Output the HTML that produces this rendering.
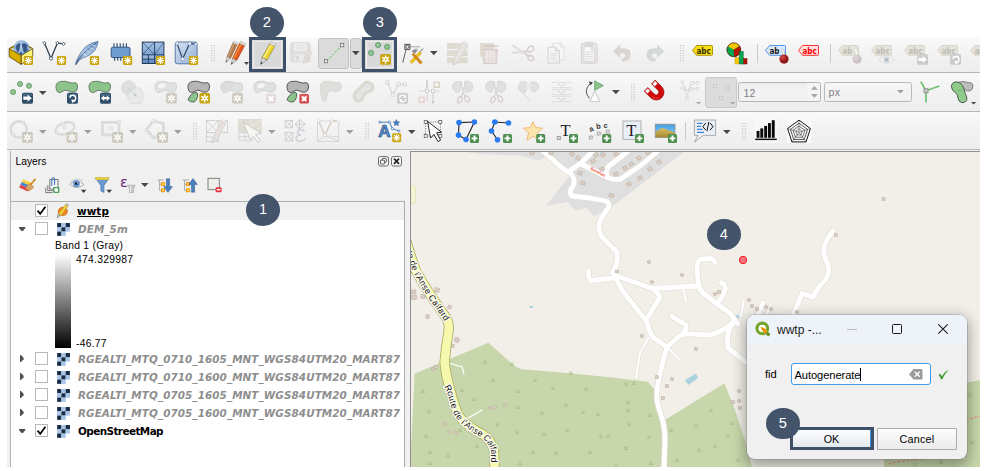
<!DOCTYPE html>
<html lang="en"><head><meta charset="utf-8"><title>QGIS - add point feature</title>
<style>
html,body{margin:0;padding:0;background:#fff;}
body{width:985px;height:471px;position:relative;overflow:hidden;font-family:"Liberation Sans",sans-serif;font-size:10.3px;color:#000;}
.abs{position:absolute;}
#app{position:absolute;left:7px;top:38px;width:973px;height:429px;background:#f0f0f0;overflow:hidden;}
.hl{position:absolute;left:7px;width:973px;height:1px;}
svg{position:absolute;overflow:visible;}
.lyr{font-family:"DejaVu Sans","Liberation Sans",sans-serif;font-weight:bold;font-style:italic;font-size:10.4px;line-height:16px;white-space:nowrap;letter-spacing:0.08px}
.lyr.g{color:#8e8e8e;}
.t{font-size:10.3px;line-height:14px;white-space:nowrap;letter-spacing:0.28px}
.badge{position:absolute;width:33.6px;height:31.6px;border-radius:50%;background:#44546a;color:#fff;font-size:14.6px;line-height:31.6px;text-align:center;font-family:"Liberation Sans",sans-serif;}
</style></head>
<body>
<div id="app"></div>
<div class="hl" style="top:38px;height:34px;background:linear-gradient(#f9f9f9,#f2f2f2 50%,#ededed)"></div>
<div class="hl" style="top:73px;height:38px;background:linear-gradient(#f9f9f9,#f2f2f2 50%,#ededed)"></div>
<div class="hl" style="top:112px;height:37px;background:linear-gradient(#f9f9f9,#f2f2f2 50%,#ededed)"></div>
<div class="hl" style="top:72px;background:#b6b6b6"></div>
<div class="hl" style="top:111px;background:#b6b6b6"></div>
<div class="hl" style="top:149px;background:#b6b6b6"></div>
<div class="hl" style="top:150px;background:#f3f3f3"></div>
<svg width="0" height="0" style="left:0;top:0"><defs>
<linearGradient id="gBlue" x1="0" y1="0" x2="0" y2="1"><stop offset="0" stop-color="#a9c4e6"/><stop offset="1" stop-color="#5e8cc4"/></linearGradient>
<linearGradient id="gBlueL" x1="0" y1="0" x2="1" y2="1"><stop offset="0" stop-color="#d5e1f1"/><stop offset="1" stop-color="#93b1d9"/></linearGradient>
<radialGradient id="gGlobe" cx="0.4" cy="0.35" r="0.7"><stop offset="0" stop-color="#c5daf2"/><stop offset="1" stop-color="#6b96cf"/></radialGradient>
<radialGradient id="gPin" cx="0.35" cy="0.3" r="0.75"><stop offset="0" stop-color="#d9514e"/><stop offset="0.5" stop-color="#a51d1d"/><stop offset="1" stop-color="#7c1010"/></radialGradient>
<radialGradient id="gPinD" cx="0.35" cy="0.3" r="0.75"><stop offset="0" stop-color="#dcd6d6"/><stop offset="1" stop-color="#c4bcbc"/></radialGradient>
<linearGradient id="gSand" x1="0" y1="0" x2="0" y2="1"><stop offset="0" stop-color="#d8bf6a"/><stop offset="1" stop-color="#a88a2c"/></linearGradient>
<linearGradient id="gSky" x1="0" y1="0" x2="0" y2="1"><stop offset="0" stop-color="#3f9fe6"/><stop offset="1" stop-color="#9ed2f4"/></linearGradient>
<linearGradient id="gFeather" x1="1" y1="0" x2="0" y2="1"><stop offset="0" stop-color="#7fa3cf"/><stop offset="0.6" stop-color="#a9c3e2"/><stop offset="1" stop-color="#5d7fa8"/></linearGradient>
</defs></svg>
<svg style="left:9px;top:41px" width="24" height="24" viewBox="0 0 24 24" ><path d="M0.2 7.5 L12.3 1 L23.75 7.5" fill="#b89200" stroke="#4a3a00" stroke-width="0.7" stroke-linejoin="round"/><circle cx="12.5" cy="7.2" r="7.7" fill="url(#gGlobe)" stroke="#7fa3d3" stroke-width="0.4"/><path d="M6.6 5.4 Q8 2.4 10.8 2 Q12.4 3.4 11 5.6 Q11.4 8.6 9.4 10.8 Q7.6 11.6 7.6 8.8 Q6.2 7.4 6.6 5.4Z M13.2 2.4 Q16.6 1.6 18.6 4.4 Q17 6.4 18.6 8.6 Q18.2 11.6 15.2 11.2 Q13.4 9.6 13.8 7.2 Q12.2 4.6 13.2 2.4Z M10.6 11.4 Q12.4 10.8 13.4 12.6 Q12.8 14.2 11.4 14Z" fill="#2b4e7e" opacity="0.92"/><path d="M0.2 7.5 L12.3 14.5 L12.3 23.4 L0.2 15.8Z" fill="#d9ac00" stroke="#4a3a00" stroke-width="0.75" stroke-linejoin="round"/><path d="M12.3 14.5 L23.75 7.5 L23.75 15.5 L12.3 23.4Z" fill="#fff47c" stroke="#4a3a00" stroke-width="0.75" stroke-linejoin="round"/><rect x="14.8" y="14.9" width="9.2" height="9.2" rx="1.47" fill="#c9a40e"/><path d="M15.81 19.50L22.99 19.50M16.86 16.96L21.94 22.04M19.40 15.91L19.40 23.09M21.94 16.96L16.86 22.04" stroke="#fff" stroke-width="1.15" stroke-linecap="butt" fill="none"/></svg>
<svg style="left:42px;top:41px" width="24" height="24" viewBox="0 0 24 24" ><path d="M2.4 2 L9 17.4 L15.4 2 L21.6 2.8" fill="none" stroke="#2c3e50" stroke-width="1.25" stroke-linejoin="round"/><g fill="#fff" stroke="#2c3e50" stroke-width="0.8"><path d="M2.4 0.3L4.1 2L2.4 3.7L0.7 2Z"/><path d="M15.4 0.3L17.1 2L15.4 3.7L13.7 2Z"/><path d="M21.6 1.1L23.3 2.8L21.6 4.5L19.9 2.8Z"/><circle cx="9" cy="17.4" r="1.6"/></g><rect x="14.9" y="14.9" width="9.2" height="9.2" rx="1.47" fill="#c9a40e"/><path d="M15.91 19.50L23.09 19.50M16.96 16.96L22.04 22.04M19.50 15.91L19.50 23.09M22.04 16.96L16.96 22.04" stroke="#fff" stroke-width="1.15" stroke-linecap="butt" fill="none"/></svg>
<svg style="left:75px;top:41px" width="24" height="24" viewBox="0 0 24 24" ><path d="M23.1 0.25 Q16 1.5 10 6.25 Q5 11.5 1.9 18.75 L0.25 23.5 L1.25 23.5 L3.75 20 Q5 17.8 10 16.25 Q16 14 19.4 10 Q22.8 5.5 23.1 0.25Z" fill="url(#gFeather)" stroke="#4b6c96" stroke-width="0.6" stroke-linejoin="round"/><path d="M0.8 23.4 Q5 13.4 21.8 1.6" fill="none" stroke="#35557f" stroke-width="0.8"/><path d="M7.4 12.6 L11.4 14.4 M10.4 9.4 L15 11.4 M13.8 6.6 L18.4 8 M17.4 4.2 L21 5" stroke="#dbe7f5" stroke-width="0.7" fill="none"/><rect x="14.9" y="14.9" width="9.2" height="9.2" rx="1.47" fill="#c9a40e"/><path d="M15.91 19.50L23.09 19.50M16.96 16.96L22.04 22.04M19.50 15.91L19.50 23.09M22.04 16.96L16.96 22.04" stroke="#fff" stroke-width="1.15" stroke-linecap="butt" fill="none"/></svg>
<svg style="left:108px;top:41px" width="24" height="24" viewBox="0 0 24 24" ><path d="M6 2.2V6.5M9.1 2.2V6.5M12.2 2.2V6.5M15.3 2.2V6.5M18.4 2.2V6.5M6.6 16V19.8M9.7 16V19.8M12.8 16V19.8" stroke="#27456f" stroke-width="1.1" fill="none"/><rect x="3.2" y="6.2" width="18.8" height="10.4" rx="1.6" fill="#6e9bd0" stroke="#2b4b7a" stroke-width="0.9"/><rect x="15" y="14.9" width="9.2" height="9.2" rx="1.47" fill="#c9a40e"/><path d="M16.01 19.50L23.19 19.50M17.06 16.96L22.14 22.04M19.60 15.91L19.60 23.09M22.14 16.96L17.06 22.04" stroke="#fff" stroke-width="1.15" stroke-linecap="butt" fill="none"/></svg>
<svg style="left:141px;top:41px" width="24" height="24" viewBox="0 0 24 24" ><rect x="1.3" y="1.1" width="21.6" height="21.4" fill="url(#gBlue)" stroke="#243a5c" stroke-width="1"/><path d="M13.6 1.1V22.5M1.3 13.8H22.9M7.4 13.8V22.5M1.3 18.1H13.6" stroke="#243a5c" stroke-width="0.9" fill="none"/><path d="M1.3 1.1L13.6 13.8M13.6 1.1L1.3 13.8M13.6 13.8L22.9 1.1" stroke="#243a5c" stroke-width="0.6" fill="none"/><rect x="2" y="14.5" width="4.8" height="3" fill="#fff" opacity="0.28"/><rect x="8" y="14.5" width="5" height="3" fill="#fff" opacity="0.28"/><rect x="14.9" y="14.9" width="9.2" height="9.2" rx="1.47" fill="#c9a40e"/><path d="M15.91 19.50L23.09 19.50M16.96 16.96L22.04 22.04M19.50 15.91L19.50 23.09M22.04 16.96L16.96 22.04" stroke="#fff" stroke-width="1.15" stroke-linecap="butt" fill="none"/></svg>
<svg style="left:174px;top:41px" width="24" height="24" viewBox="0 0 24 24" ><rect x="1.2" y="1" width="21.9" height="21.8" rx="2.2" fill="url(#gBlueL)" stroke="#4d6e9d" stroke-width="0.9"/><path d="M3.1 2.6 L8.6 18 L15.6 2.6 L21.8 3.2" fill="none" stroke="#2b456c" stroke-width="1.2" stroke-linejoin="round"/><g fill="#fff" stroke="#5a79a5" stroke-width="0.5"><circle cx="3.1" cy="2.6" r="1.4"/><circle cx="15.6" cy="2.6" r="1.6"/><circle cx="21.8" cy="3.2" r="1.3"/><circle cx="8.6" cy="18" r="1.7"/></g><rect x="14.9" y="14.9" width="9.2" height="9.2" rx="1.47" fill="#c9a40e"/><path d="M15.91 19.50L23.09 19.50M16.96 16.96L22.04 22.04M19.50 15.91L19.50 23.09M22.04 16.96L16.96 22.04" stroke="#fff" stroke-width="1.15" stroke-linecap="butt" fill="none"/></svg>
<svg style="left:211.2px;top:44.6px" width="4.2" height="17.849999999999998" viewBox="0 0 4.2 17.849999999999998" ><rect x="0.2" y="0.0" width="1" height="1" fill="#b6b6b6"/><rect x="2.8000000000000003" y="0.0" width="1" height="1" fill="#b6b6b6"/><rect x="0.2" y="2.55" width="1" height="1" fill="#b6b6b6"/><rect x="2.8000000000000003" y="2.55" width="1" height="1" fill="#b6b6b6"/><rect x="0.2" y="5.1" width="1" height="1" fill="#b6b6b6"/><rect x="2.8000000000000003" y="5.1" width="1" height="1" fill="#b6b6b6"/><rect x="0.2" y="7.6499999999999995" width="1" height="1" fill="#b6b6b6"/><rect x="2.8000000000000003" y="7.6499999999999995" width="1" height="1" fill="#b6b6b6"/><rect x="0.2" y="10.2" width="1" height="1" fill="#b6b6b6"/><rect x="2.8000000000000003" y="10.2" width="1" height="1" fill="#b6b6b6"/><rect x="0.2" y="12.75" width="1" height="1" fill="#b6b6b6"/><rect x="2.8000000000000003" y="12.75" width="1" height="1" fill="#b6b6b6"/><rect x="0.2" y="15.299999999999999" width="1" height="1" fill="#b6b6b6"/><rect x="2.8000000000000003" y="15.299999999999999" width="1" height="1" fill="#b6b6b6"/></svg>
<svg style="left:223px;top:41px" width="24" height="25" viewBox="0 0 24 25" ><path d="M4 15.6L9.81 2.09L14.10 3.77L7.5 17.5Z" fill="#b37c4c" stroke="#865831" stroke-width="0.5" stroke-linejoin="round"/><path d="M4.98 16.13L11.01 2.56" stroke="#d2a276" stroke-width="1.2"/><path d="M9.81 2.09L10.6 0.25L15 1.9L14.10 3.77Z" fill="#e6e6e6" stroke="#8e8e8e" stroke-width="0.45" stroke-linejoin="round"/><path d="M4 15.6L7.5 17.5L2.75 21.5Z" fill="#d6d6d6" stroke="#707070" stroke-width="0.45" stroke-linejoin="round"/><path d="M2.75 21.5L3.20 19.38L4.46 20.06Z" fill="#3a3a3a"/><path d="M9.4 17.5L16.53 2.32L21.67 4.75L13.75 19.4Z" fill="#e2581e" stroke="#9b3208" stroke-width="0.5" stroke-linejoin="round"/><path d="M10.62 18.03L17.97 3.00" stroke="#f29a44" stroke-width="1.2"/><path d="M16.53 2.32L17.5 0.25L22.75 2.75L21.67 4.75Z" fill="#e6e6e6" stroke="#8e8e8e" stroke-width="0.45" stroke-linejoin="round"/><path d="M9.4 17.5L13.75 19.4L8.1 23.5Z" fill="#d6d6d6" stroke="#707070" stroke-width="0.45" stroke-linejoin="round"/><path d="M8.1 23.5L8.57 21.34L10.13 22.02Z" fill="#3a3a3a"/></svg>
<svg style="left:243.6px;top:62px" width="5" height="3" viewBox="0 0 5 3" ><path d="M0 0H5L2.5 3Z" fill="#444"/></svg>
<div class="abs" style="left:249px;top:37px;width:31px;height:29px;border:3px solid #3f506b;background:#d9d9d9"></div>
<div class="abs" style="left:252.6px;top:40.6px;width:29.8px;height:27.8px;border:0.6px solid #ececec;box-sizing:border-box"></div>
<svg style="left:257px;top:42px" width="24" height="24" viewBox="0 0 24 24" ><path d="M5 15.5L13.01 1.51L17.70 4.36L10 18Z" fill="#eed632" stroke="#6f6414" stroke-width="0.5" stroke-linejoin="round"/><path d="M6.40 16.20L14.32 2.31" stroke="#fbf3a0" stroke-width="1.2"/><path d="M13.01 1.51L14.1 -0.4L18.75 2.5L17.70 4.36Z" fill="#f0f0f0" stroke="#8e8e8e" stroke-width="0.45" stroke-linejoin="round"/><path d="M5 15.5L10 18L3.5 22.5Z" fill="#d6d6d6" stroke="#707070" stroke-width="0.45" stroke-linejoin="round"/><path d="M3.5 22.5L4.04 19.98L5.84 20.88Z" fill="#3a3a3a"/></svg>
<svg style="left:290px;top:41px" width="24" height="24" viewBox="0 0 24 24" ><rect x="0.6" y="1.4" width="19.6" height="19.6" rx="2" fill="#dfdfdf" stroke="#d2d2d2" stroke-width="0.6"/><rect x="4" y="2.4" width="12.6" height="7.6" fill="#f1f1f1"/><path d="M5.4 4.4H15.2M5.4 6.2H15.2M5.4 8H15.2" stroke="#d8d8d8" stroke-width="0.7"/><rect x="5" y="13.6" width="9.6" height="7" fill="#ececec"/><rect x="6.4" y="15" width="2.4" height="4.6" fill="#d6d6d6"/><path d="M13 19.4 L18.4 9 L22.2 11 L16.8 21.4Z" fill="#e3ddd8" stroke="#d4ccc6" stroke-width="0.4"/><path d="M13 19.4 L16.8 21.4 L12.6 23.6Z" fill="#dedede"/></svg>
<div class="abs" style="left:318.4px;top:38.2px;width:30.8px;height:30.6px;box-sizing:border-box;border:1px solid #c2c2c2;border-radius:3px;background:#dbdbdb"></div>
<div class="abs" style="left:350.4px;top:38.2px;width:11.6px;height:30.6px;box-sizing:border-box;border:1px solid #c2c2c2;border-radius:3px;background:#dbdbdb"></div>
<svg style="left:322px;top:42px" width="24" height="24" viewBox="0 0 24 24" ><path d="M5 18.6 L19 4.4" stroke="#7cc47c" stroke-width="1.1" stroke-dasharray="2.2 1.6" fill="none"/><rect x="2.4" y="17.6" width="3.2" height="3.2" fill="#e8e8e8" stroke="#6a6a6a" stroke-width="0.7"/><rect x="18.6" y="1.6" width="3.2" height="3.2" fill="#e8e8e8" stroke="#6a6a6a" stroke-width="0.7"/></svg>
<svg style="left:352.2px;top:51px" width="7.6" height="4.2" viewBox="0 0 7.6 4.2" ><path d="M0 0H7.6L3.8 4.2Z" fill="#484848"/></svg>
<div class="abs" style="left:362px;top:37px;width:29px;height:29px;border:3px solid #3f506b;background:#d9d9d9"></div>
<div class="abs" style="left:365.6px;top:40.6px;width:27.8px;height:27.8px;border:0.6px solid #ececec;box-sizing:border-box"></div>
<svg style="left:366px;top:41px" width="28" height="24" viewBox="0 0 28 24" ><g fill="#8cc78f" stroke="#4f8a5c" stroke-width="0.7"><circle cx="12.1" cy="4" r="2.6"/><circle cx="21.1" cy="5.9" r="2.6"/><circle cx="5.1" cy="11.9" r="2.6"/></g><rect x="14.2" y="13.1" width="10.7" height="10.7" rx="1.50" fill="#c9a40e"/><path d="M19.55 14.49L19.55 22.41M22.98 16.47L16.12 20.43M22.98 20.43L16.12 16.47" stroke="#fff" stroke-width="1.50" stroke-linecap="butt" fill="none"/><circle cx="19.549999999999997" cy="18.45" r="2.14" fill="#fff"/><circle cx="19.549999999999997" cy="18.45" r="0.86" fill="#c9a40e"/></svg>
<svg style="left:402px;top:41px" width="24" height="24" viewBox="0 0 24 24" ><path d="M4.4 7 L0.8 21.6" stroke="#222" stroke-width="0.7"/><path d="M7 5.8 H18" stroke="#9a9a9a" stroke-width="0.9"/><rect x="2.9" y="3.3" width="5" height="5" fill="#fff" stroke="#222" stroke-width="0.8"/><circle cx="5.4" cy="5.8" r="1.5" fill="none" stroke="#222" stroke-width="0.7"/><path d="M8 20.6 L17.6 10.4 L19.6 12.4 L10 22.6Z" fill="#f2c417" stroke="#b98d06" stroke-width="0.4"/><path d="M9.4 10.6 L12.6 8 L15.6 9.2 L13 12.6Z" fill="#8d8d8d"/><path d="M12.6 8 L15.6 9.2 L16.8 8.2 L14 6.8Z" fill="#c9c9c9"/><path d="M11.6 12 L20.4 21.4 L18.2 23 L10 13.6Z" fill="#d98a14" stroke="#a6660a" stroke-width="0.4"/><path d="M17.2 10.6 L20.8 7 L21.8 8 L18.4 11.8Z" fill="#a8a8a8"/></svg>
<svg style="left:430.4px;top:51px" width="7.6" height="4.2" viewBox="0 0 7.6 4.2" ><path d="M0 0H7.6L3.8 4.2Z" fill="#484848"/></svg>
<svg style="left:446px;top:41px" width="24" height="24" viewBox="0 0 24 24" ><g fill="#dedcd0" stroke="#d3d1c6" stroke-width="0.4"><rect x="1.2" y="2.4" width="20" height="5.2"/><rect x="1.2" y="9.6" width="20" height="5.2"/><rect x="1.2" y="16.8" width="20" height="5.2"/></g><path d="M7.6 19.6 L16.4 1.6 L21 3.8 L12.2 21.8Z" fill="#e9e5e2" stroke="#cfc8c4" stroke-width="0.5"/><path d="M16.4 1.6 L17.2 0 L21.8 2.2 L21 3.8Z" fill="#efefef" stroke="#d5d5d5" stroke-width="0.4"/><path d="M7.6 19.6 L12.2 21.8 L6.8 24Z" fill="#e2e2e2" stroke="#cfcfcf" stroke-width="0.4"/><path d="M6.8 24 L7.5 21.8 L9 22.9Z" fill="#bdbdbd"/></svg>
<svg style="left:479px;top:41px" width="24" height="24" viewBox="0 0 24 24" ><rect x="1.2" y="2.4" width="13" height="13" fill="#e0ded2" stroke="#d4d2c6" stroke-width="0.5"/><path d="M3.4 5.2H18.8M6.6 4.4H15.4" stroke="#d9caca" stroke-width="1.4" fill="none"/><path d="M3.8 8.4 H18.4 L17.4 22.6 H4.8Z" fill="#e3d9d9" stroke="#d5c5c5" stroke-width="0.9"/><path d="M7.8 9.6 V21.6 M11.1 9.6 V21.6 M14.4 9.6V21.6" stroke="#efe9e9" stroke-width="1.6"/><path d="M4 15.4H18" stroke="#efe9e9" stroke-width="0.8"/></svg>
<svg style="left:511px;top:41px" width="24" height="24" viewBox="0 0 24 24" ><path d="M2 4.6 L18.6 15.6" stroke="#d9d9d9" stroke-width="1.7" stroke-linecap="round"/><path d="M1.4 11.2 Q8 9.8 15.4 10.6 L16 12 Q8 12.6 1.4 12.4Z" fill="#e6e6e6" stroke="#d0d0d0" stroke-width="0.5"/><ellipse cx="19.6" cy="8" rx="3.4" ry="2.4" transform="rotate(-38 19.6 8)" fill="none" stroke="#d7cccc" stroke-width="1.3"/><ellipse cx="19.8" cy="17" rx="3.2" ry="2.3" transform="rotate(35 19.8 17)" fill="none" stroke="#d7cccc" stroke-width="1.3"/><path d="M11 10.8 L17.4 9.6 M14 12.6 L17.4 15.4" stroke="#d7cccc" stroke-width="1.3"/></svg>
<svg style="left:546px;top:41px" width="24" height="24" viewBox="0 0 24 24" ><path d="M6.8 2.2 H14.4 L18 5.8 V18.8 H6.8Z" fill="#f6f6f6" stroke="#d9d9d9" stroke-width="0.8"/><path d="M14.4 2.2 V5.8 H18" fill="none" stroke="#d9d9d9" stroke-width="0.7"/><path d="M2 6.2 H9.6 L13.4 10 V22 H2Z" fill="#f5f5f5" stroke="#cdcdcd" stroke-width="0.9"/><path d="M9.6 6.2 V10 H13.4" fill="#e4e4e4" stroke="#cdcdcd" stroke-width="0.7"/><path d="M4 12.6H11.4M4 14.8H11.4M4 17H11.4M4 19.2H11.4" stroke="#d6d6d6" stroke-width="0.8"/></svg>
<svg style="left:580px;top:41px" width="24" height="24" viewBox="0 0 24 24" ><rect x="1.4" y="2.6" width="15.6" height="19.6" rx="1.2" fill="#ebe7e6" stroke="#d2cbca" stroke-width="0.9"/><rect x="5" y="1.2" width="8.4" height="3.6" rx="1" fill="#dcdcdc" stroke="#d0d0d0" stroke-width="0.5"/><path d="M4 5.4 H11.2 L14.6 8.8 V20.2 H4Z" fill="#f7f7f7" stroke="#cfcfcf" stroke-width="0.8"/><path d="M11.2 5.4V8.8H14.6" fill="#e6e6e6" stroke="#cfcfcf" stroke-width="0.6"/><path d="M5.6 11H12.8M5.6 13.2H12.8M5.6 15.4H12.8M5.6 17.6H12.8" stroke="#d6d6d6" stroke-width="0.8"/></svg>
<svg style="left:612px;top:41px" width="24" height="24" viewBox="0 0 24 24" ><path d="M1 10.4 L8.2 3.2 V7.2 H11.6 Q18.8 7.6 18.8 13.6 Q18.6 19.4 12.6 20.4 H9.6 V17.6 Q13.4 17 13.4 14.2 Q13.2 12.6 11.2 12.6 H8.2 V17Z" fill="#dbd5d2"/></svg>
<svg style="left:645px;top:41px" width="24" height="24" viewBox="0 0 24 24" ><path d="M19.2 10.4 L12 3.2 V7.2 H8.6 Q1.4 7.6 1.4 13.6 Q1.6 19.4 7.6 20.4 H10.6 V17.6 Q6.8 17 6.8 14.2 Q7 12.6 9 12.6 H12 V17Z" fill="#d5d9d5"/></svg>
<svg style="left:679.8px;top:44.6px" width="4.2" height="17.849999999999998" viewBox="0 0 4.2 17.849999999999998" ><rect x="0.2" y="0.0" width="1" height="1" fill="#b6b6b6"/><rect x="2.8000000000000003" y="0.0" width="1" height="1" fill="#b6b6b6"/><rect x="0.2" y="2.55" width="1" height="1" fill="#b6b6b6"/><rect x="2.8000000000000003" y="2.55" width="1" height="1" fill="#b6b6b6"/><rect x="0.2" y="5.1" width="1" height="1" fill="#b6b6b6"/><rect x="2.8000000000000003" y="5.1" width="1" height="1" fill="#b6b6b6"/><rect x="0.2" y="7.6499999999999995" width="1" height="1" fill="#b6b6b6"/><rect x="2.8000000000000003" y="7.6499999999999995" width="1" height="1" fill="#b6b6b6"/><rect x="0.2" y="10.2" width="1" height="1" fill="#b6b6b6"/><rect x="2.8000000000000003" y="10.2" width="1" height="1" fill="#b6b6b6"/><rect x="0.2" y="12.75" width="1" height="1" fill="#b6b6b6"/><rect x="2.8000000000000003" y="12.75" width="1" height="1" fill="#b6b6b6"/><rect x="0.2" y="15.299999999999999" width="1" height="1" fill="#b6b6b6"/><rect x="2.8000000000000003" y="15.299999999999999" width="1" height="1" fill="#b6b6b6"/></svg>
<svg style="left:692.2px;top:45px" width="30" height="22" viewBox="0 0 30 22" ><path d="M4.6 0.5 H19.6 Q20.5 0.5 20.5 1.4 V9.4 Q20.5 10.3 19.6 10.3 H4.6 L0.5 5.4Z" fill="#f7dc1a" stroke="#a58b00" stroke-width="0.9" stroke-linejoin="round"/><text x="4.4" y="8.6" font-family="DejaVu Sans, Liberation Sans, sans-serif" font-weight="bold" font-size="8.2" fill="#3a3200" textLength="14.4" lengthAdjust="spacingAndGlyphs">abc</text></svg>
<svg style="left:726px;top:41px" width="24" height="24" viewBox="0 0 24 24" ><circle cx="7.8" cy="8.8" r="6.9" fill="#00a650" stroke="#3a3a1a" stroke-width="0.5"/><path d="M7.8 8.8 L1.9 5.2 A6.9 6.9 0 0 1 13.6 5 Z" fill="#f6c500"/><path d="M7.8 8.8 L13.6 5 A6.9 6.9 0 0 1 8 15.7 Z" fill="#b31500"/><circle cx="7.8" cy="8.8" r="6.9" fill="none" stroke="#3a2a1a" stroke-width="0.6"/><rect x="9" y="16.6" width="3.8" height="6.4" fill="#f8c800" stroke="#b98f00" stroke-width="0.4"/><rect x="13.4" y="10.4" width="3.8" height="12.6" fill="#00a650" stroke="#00602e" stroke-width="0.5"/><rect x="17.6" y="17.6" width="3.4" height="5.4" fill="#b31500" stroke="#6e0d00" stroke-width="0.5"/></svg>
<div class="abs" style="left:757.4px;top:44px;width:1px;height:19px;background:#c9c9c9"></div>
<svg style="left:765px;top:45px" width="30" height="22" viewBox="0 0 30 22" ><path d="M4.6 0.5 H19.6 Q20.5 0.5 20.5 1.4 V9.4 Q20.5 10.3 19.6 10.3 H4.6 L0.5 5.4Z" fill="#d9e8fb" stroke="#3d8de6" stroke-width="0.9" stroke-linejoin="round"/><text x="4.4" y="8.6" font-family="DejaVu Sans, Liberation Sans, sans-serif" font-weight="bold" font-size="8.2" fill="#1a1a1a" textLength="10.08" lengthAdjust="spacingAndGlyphs">ab</text><path d="M16.6 4.4 Q17.6 3.6 18.4 4.6 L20.2 10 L18 10.4Z" fill="#fff" stroke="#9a9a9a" stroke-width="0.5"/><circle cx="19" cy="14.1" r="4.6" fill="url(#gPin)"/></svg>
<svg style="left:798px;top:45px" width="30" height="22" viewBox="0 0 30 22" ><path d="M4.6 0.5 H19.6 Q20.5 0.5 20.5 1.4 V9.4 Q20.5 10.3 19.6 10.3 H4.6 L0.5 5.4Z" fill="#ffe2e2" stroke="#ff1a1a" stroke-width="0.9" stroke-linejoin="round"/><text x="4.4" y="8.6" font-family="DejaVu Sans, Liberation Sans, sans-serif" font-weight="bold" font-size="8.2" fill="#f00" textLength="14.4" lengthAdjust="spacingAndGlyphs">abc</text></svg>
<div class="abs" style="left:830.4px;top:44px;width:1px;height:19px;background:#c9c9c9"></div>
<svg style="left:838px;top:45px" width="30" height="22" viewBox="0 0 30 22" ><path d="M4.6 0.5 H19.6 Q20.5 0.5 20.5 1.4 V9.4 Q20.5 10.3 19.6 10.3 H4.6 L0.5 5.4Z" fill="#e6e4da" stroke="#d6d4ca" stroke-width="0.9" stroke-linejoin="round"/><text x="4.4" y="8.6" font-family="DejaVu Sans, Liberation Sans, sans-serif" font-weight="bold" font-size="8.2" fill="#bdbdb5" textLength="10.08" lengthAdjust="spacingAndGlyphs">ab</text><path d="M16.6 4.4 Q17.6 3.6 18.4 4.6 L20.2 10 L18 10.4Z" fill="#fff" stroke="#d0d0d0" stroke-width="0.5"/><circle cx="19" cy="14.1" r="4.6" fill="url(#gPinD)"/></svg>
<svg style="left:871px;top:45px" width="30" height="22" viewBox="0 0 30 22" ><path d="M4.6 0.5 H19.6 Q20.5 0.5 20.5 1.4 V9.4 Q20.5 10.3 19.6 10.3 H4.6 L0.5 5.4Z" fill="#e6e4da" stroke="#d6d4ca" stroke-width="0.9" stroke-linejoin="round"/><text x="4.4" y="8.6" font-family="DejaVu Sans, Liberation Sans, sans-serif" font-weight="bold" font-size="8.2" fill="#bdbdb5" textLength="14.4" lengthAdjust="spacingAndGlyphs">abc</text><path d="M8 15 Q15.5 8.6 23.6 15 Q15.5 21.4 8 15Z" fill="#f4f4f4" stroke="#d2d2d2" stroke-width="0.7"/><circle cx="15.6" cy="14.8" r="2.9" fill="#cdd3dc"/><circle cx="15.6" cy="14.8" r="1.2" fill="#a9adb5"/><path d="M8.6 12.6 Q15 7 22.6 11.6" fill="none" stroke="#d6d6d6" stroke-width="0.6"/></svg>
<svg style="left:904.2px;top:45px" width="30" height="22" viewBox="0 0 30 22" ><path d="M4.6 0.5 H19.6 Q20.5 0.5 20.5 1.4 V9.4 Q20.5 10.3 19.6 10.3 H4.6 L0.5 5.4Z" fill="#e6e4da" stroke="#d6d4ca" stroke-width="0.9" stroke-linejoin="round"/><text x="4.4" y="8.6" font-family="DejaVu Sans, Liberation Sans, sans-serif" font-weight="bold" font-size="8.2" fill="#bdbdb5" textLength="14.4" lengthAdjust="spacingAndGlyphs">abc</text><rect x="13.2" y="9" width="10.8" height="10.8" rx="1.6" fill="#c9c9c9"/><path d="M14.2 10.2 H23.0 L23.0 12.5 Q18.6 10.5 14.2 13Z" fill="#dcdcdc" opacity="0.6"/><path d="M14.5 12.9H18.799999999999997V10.9L23.0 14.5L18.799999999999997 18.1V16.1H14.5Z" fill="#fff"/></svg>
<svg style="left:937px;top:45px" width="30" height="22" viewBox="0 0 30 22" ><path d="M4.6 0.5 H19.6 Q20.5 0.5 20.5 1.4 V9.4 Q20.5 10.3 19.6 10.3 H4.6 L0.5 5.4Z" fill="#e6e4da" stroke="#d6d4ca" stroke-width="0.9" stroke-linejoin="round"/><text x="4.4" y="8.6" font-family="DejaVu Sans, Liberation Sans, sans-serif" font-weight="bold" font-size="8.2" fill="#bdbdb5" textLength="14.4" lengthAdjust="spacingAndGlyphs">abc</text><rect x="13.2" y="9" width="10.8" height="10.8" rx="1.6" fill="#c9c9c9"/><path d="M14.2 10.2 H23.0 L23.0 12.5 Q18.6 10.5 14.2 13Z" fill="#dcdcdc" opacity="0.6"/><path d="M18.799999999999997 17.4 A2.9 2.9 0 1 0 16.099999999999998 14.2" stroke="#fff" stroke-width="1.5" fill="none"/><path d="M17.6 15.2L21.6 17.2L18.2 19.4Z" fill="#fff"/></svg>
<div class="abs" style="left:970px;top:45px;width:10px;height:22px;overflow:hidden"><svg style="left:0;top:0" width="30" height="22" viewBox="0 0 30 22"><path d="M4.6 0.5 H19.6 Q20.5 0.5 20.5 1.4 V9.4 Q20.5 10.3 19.6 10.3 H4.6 L0.5 5.4Z" fill="#e6e4da" stroke="#d6d4ca" stroke-width="0.9"/><text x="4.4" y="8.6" font-family="DejaVu Sans, Liberation Sans, sans-serif" font-weight="bold" font-size="8.2" fill="#bdbdb5">ab</text></svg></div>
<svg style="left:9px;top:80px" width="24" height="24" viewBox="0 0 24 24" ><g fill="#8cc48c" stroke="#5a8f62" stroke-width="0.7"><circle cx="11" cy="4" r="2.6"/><circle cx="20" cy="5.8" r="2.6"/><circle cx="4.1" cy="12" r="2.6"/></g><rect x="13" y="12.7" width="11" height="11" rx="1.6" fill="#2d4d68"/><path d="M14 13.899999999999999 H23 L23 16.2 Q18.5 14.2 14 16.7Z" fill="#5b7d99" opacity="0.6"/><path d="M14.3 16.599999999999998H18.6V14.6L22.8 18.2L18.6 21.799999999999997V19.799999999999997H14.3Z" fill="#fff"/></svg>
<svg style="left:39.4px;top:90.5px" width="7.6" height="4" viewBox="0 0 7.6 4" ><path d="M0 0H7.6L3.8 4Z" fill="#484848"/></svg>
<svg style="left:55px;top:80px" width="24" height="24" viewBox="0 0 24 24" ><path d="M1 7.6 Q0.4 2.2 6 1.4 Q10.4 0.6 14 2.4 Q17.4 3.6 20 2.6 Q22.8 3 22.6 7 Q22.6 11 19.2 12.2 Q15.6 12.8 13 10.6 Q10 9.4 7.4 11.6 Q4.6 13.6 2.6 11.8 Q1.2 10.2 1 7.6Z" fill="#8cc48c" stroke="#5b6b5b" stroke-width="0.8"/><rect x="12" y="12.7" width="11" height="11" rx="1.6" fill="#2d4d68"/><path d="M13 13.899999999999999 H22 L22 16.2 Q17.5 14.2 13 16.7Z" fill="#5b7d99" opacity="0.6"/><path d="M17.6 21.1 A2.9 2.9 0 1 0 14.9 17.9" stroke="#fff" stroke-width="1.5" fill="none"/><path d="M16.4 18.9L20.4 20.9L17 23.1Z" fill="#fff"/></svg>
<svg style="left:88px;top:80px" width="24" height="24" viewBox="0 0 24 24" ><path d="M1 7.6 Q0.4 2.2 6 1.4 Q10.4 0.6 14 2.4 Q17.4 3.6 20 2.6 Q22.8 3 22.6 7 Q22.6 11 19.2 12.2 Q15.6 12.8 13 10.6 Q10 9.4 7.4 11.6 Q4.6 13.6 2.6 11.8 Q1.2 10.2 1 7.6Z" fill="#8cc48c" stroke="#5b6b5b" stroke-width="0.8"/><rect x="12" y="12.7" width="11" height="11" rx="1.6" fill="#2d4d68"/><path d="M13 13.899999999999999 H22 L22 16.2 Q17.5 14.2 13 16.7Z" fill="#5b7d99" opacity="0.6"/><path d="M12.9 18.2L16.2 15.299999999999999V17.1H18.8V15.299999999999999L22.1 18.2L18.8 21.1V19.299999999999997H16.2V21.1Z" fill="#fff"/></svg>
<svg style="left:121px;top:80px" width="24" height="24" viewBox="0 0 24 24" ><circle cx="7.6" cy="8" r="7.2" fill="#dcdfdc" stroke="#d2d5d2" stroke-width="0.5"/><path d="M14.6 8 L19.2 8 L23 16 L19.2 23.6 L10 23.6 L6.2 16 L9.6 9.2Z" fill="#e8eaea" stroke="#d0d3d3" stroke-width="0.7" opacity="0.92"/><path d="M7.6 8 L14.6 15.6" stroke="#c4c8c4" stroke-width="0.9"/><path d="M15.8 16.8 L12.2 15.8 L14.8 13.2Z" fill="#c4c8c4"/></svg>
<svg style="left:154px;top:80px" width="24" height="24" viewBox="0 0 24 24" ><path d="M1 7.6 Q0.4 2.2 6 1.4 Q10.4 0.6 14 2.4 Q17.4 3.6 20 2.6 Q22.8 3 22.6 7 Q22.6 11 19.2 12.2 Q15.6 12.8 13 10.6 Q10 9.4 7.4 11.6 Q4.6 13.6 2.6 11.8 Q1.2 10.2 1 7.6Z" fill="#dfe1df" stroke="#c9cdc9" stroke-width="0.8"/><ellipse cx="8" cy="5.8" rx="4.6" ry="3" transform="rotate(-12 8 5.8)" fill="#f4f4f4" stroke="#d2d5d2" stroke-width="0.6"/><rect x="12.2" y="13" width="10.6" height="10.6" rx="1.48" fill="#cdc9bd"/><path d="M17.50 14.38L17.50 22.22M20.90 16.34L14.10 20.26M20.90 20.26L14.10 16.34" stroke="#fff" stroke-width="1.48" stroke-linecap="butt" fill="none"/><circle cx="17.5" cy="18.3" r="2.12" fill="#fff"/><circle cx="17.5" cy="18.3" r="0.85" fill="#cdc9bd"/></svg>
<svg style="left:187px;top:80px" width="24" height="24" viewBox="0 0 24 24" ><path d="M1 7.6 Q0.4 2.2 6 1.4 Q10.4 0.6 14 2.4 Q17.4 3.6 20 2.6 Q22.8 3 22.6 7 Q22.6 11 19.2 12.2 Q15.6 12.8 13 10.6 Q10 9.4 7.4 11.6 Q4.6 13.6 2.6 11.8 Q1.2 10.2 1 7.6Z" fill="#b5b5b5" stroke="#4c4c4c" stroke-width="0.9"/><path d="M1 19.8 Q3.4 13.4 9 12.2 Q11.4 12.4 10.6 16.6 Q9.6 21 7 22 Q3.6 22.6 1 19.8Z" fill="#8cc48c" stroke="#3c4a3c" stroke-width="0.8"/><rect x="12.4" y="13" width="10.6" height="10.6" rx="1.48" fill="#c9a40e"/><path d="M17.70 14.38L17.70 22.22M21.10 16.34L14.30 20.26M21.10 20.26L14.30 16.34" stroke="#fff" stroke-width="1.48" stroke-linecap="butt" fill="none"/><circle cx="17.7" cy="18.3" r="2.12" fill="#fff"/><circle cx="17.7" cy="18.3" r="0.85" fill="#c9a40e"/></svg>
<svg style="left:220px;top:80px" width="24" height="24" viewBox="0 0 24 24" ><path d="M1 7.6 Q0.4 2.2 6 1.4 Q10.4 0.6 14 2.4 Q17.4 3.6 20 2.6 Q22.8 3 22.6 7 Q22.6 11 19.2 12.2 Q15.6 12.8 13 10.6 Q10 9.4 7.4 11.6 Q4.6 13.6 2.6 11.8 Q1.2 10.2 1 7.6Z" fill="#dfe1df" stroke="#c9cdc9" stroke-width="0.8"/><ellipse cx="7.4" cy="5.8" rx="4.8" ry="3.2" transform="rotate(-12 7.4 5.8)" fill="#dcdfdc" stroke="#d0d3d0" stroke-width="0.6"/><rect x="12.2" y="13" width="10.6" height="10.6" rx="1.48" fill="#cdc9bd"/><path d="M17.50 14.38L17.50 22.22M20.90 16.34L14.10 20.26M20.90 20.26L14.10 16.34" stroke="#fff" stroke-width="1.48" stroke-linecap="butt" fill="none"/><circle cx="17.5" cy="18.3" r="2.12" fill="#fff"/><circle cx="17.5" cy="18.3" r="0.85" fill="#cdc9bd"/></svg>
<svg style="left:253px;top:80px" width="24" height="24" viewBox="0 0 24 24" ><path d="M1 7.6 Q0.4 2.2 6 1.4 Q10.4 0.6 14 2.4 Q17.4 3.6 20 2.6 Q22.8 3 22.6 7 Q22.6 11 19.2 12.2 Q15.6 12.8 13 10.6 Q10 9.4 7.4 11.6 Q4.6 13.6 2.6 11.8 Q1.2 10.2 1 7.6Z" fill="#dfe1df" stroke="#c9cdc9" stroke-width="0.8"/><ellipse cx="8" cy="5.8" rx="4.6" ry="3" transform="rotate(-12 8 5.8)" fill="#f4f4f4" stroke="#d2d5d2" stroke-width="0.6"/><rect x="13.2" y="14" width="9.6" height="9.6" rx="1.6" fill="#e2d6d6"/><path d="M14.2 15.2 H21.799999999999997 L21.799999999999997 17.5 Q18.0 15.5 14.2 18Z" fill="#ece4e4" opacity="0.6"/><path d="M15.799999999999999 16.6L20.199999999999996 21.0M20.199999999999996 16.6L15.799999999999999 21.0" stroke="#fff" stroke-width="2.2" fill="none"/></svg>
<svg style="left:286px;top:80px" width="24" height="24" viewBox="0 0 24 24" ><path d="M1 7.6 Q0.4 2.2 6 1.4 Q10.4 0.6 14 2.4 Q17.4 3.6 20 2.6 Q22.8 3 22.6 7 Q22.6 11 19.2 12.2 Q15.6 12.8 13 10.6 Q10 9.4 7.4 11.6 Q4.6 13.6 2.6 11.8 Q1.2 10.2 1 7.6Z" fill="#b5b5b5" stroke="#4c4c4c" stroke-width="0.9"/><path d="M1 19.8 Q3.4 13.4 9 12.2 Q11.4 12.4 10.6 16.6 Q9.6 21 7 22 Q3.6 22.6 1 19.8Z" fill="#8cc48c" stroke="#3c4a3c" stroke-width="0.8"/><rect x="13.4" y="14" width="9.6" height="9.6" rx="1.6" fill="#d2474b"/><path d="M14.4 15.2 H22.0 L22.0 17.5 Q18.2 15.5 14.4 18Z" fill="#e07a7d" opacity="0.6"/><path d="M16.0 16.6L20.4 21.0M20.4 16.6L16.0 21.0" stroke="#fff" stroke-width="2.2" fill="none"/></svg>
<svg style="left:319px;top:80px" width="24" height="24" viewBox="0 0 24 24" ><path d="M1 6.4 Q1.6 1.6 7 1.2 Q11.4 1 14.6 2 Q18.2 3 20 2.4 Q22.6 3 22.2 7 Q21.8 10.8 18.4 11.4 Q14.6 11.6 12 10.4 Q9.6 10.2 8.6 13.4 Q8.4 17.6 6.6 20.6 Q4.6 22.4 3 19.6 Q1.4 14 1 6.4Z" fill="#dedfda" stroke="#d2d3ce" stroke-width="0.7"/></svg>
<svg style="left:352px;top:80px" width="24" height="24" viewBox="0 0 24 24" ><path d="M1.2 16.4 Q1 12.6 4.6 9.6 Q8.4 6.6 10.6 3.4 Q13.6 0.2 17.6 1.6 Q22.4 3.4 22 8.2 Q21.6 11.8 17 12.6 Q14 13.2 12.6 16.4 Q11 20.8 6.6 22.2 Q2 22.6 1.2 16.4Z" fill="#dedcd2" stroke="#d0cec4" stroke-width="0.7"/><path d="M3.4 16.2 Q3.4 13.4 6.2 11.2 Q10 8.2 12.2 5 Q14.4 2.6 17 3.6 Q20.2 4.8 19.8 8 Q19.4 10.4 16.4 10.8 Q12.6 11.4 10.8 15.4 Q9.4 19.2 6.4 20 Q3.6 20.2 3.4 16.2Z" fill="#e3e5e3" stroke="#cfd1cf" stroke-width="0.6"/></svg>
<svg style="left:385px;top:80px" width="24" height="24" viewBox="0 0 24 24" ><path d="M2.4 2.4 L7.6 14.6 L13.6 4.4 L20 4.4" fill="none" stroke="#d4d8d4" stroke-width="1.2"/><g fill="#f2f2f2" stroke="#cfcfcf" stroke-width="0.7"><rect x="0.8" y="0.8" width="3.2" height="3.2"/><rect x="12" y="2.8" width="3.2" height="3.2"/><rect x="18.4" y="2.8" width="3.2" height="3.2"/><rect x="6" y="13" width="3.2" height="3.2"/></g><rect x="12.2" y="13" width="10.8" height="10.8" rx="1.6" fill="#cbcbcb"/><path d="M13.2 14.2 H22.0 L22.0 16.5 Q17.6 14.5 13.2 17Z" fill="#dedede" opacity="0.6"/><path d="M14.5 18A3.2 3.2 0 0 1 20.2 16.4" stroke="#fff" stroke-width="1.3" fill="none"/><path d="M19.2 14.6L21.799999999999997 17.6L18.2 18Z" fill="#fff"/><path d="M20.9 19A3.2 3.2 0 0 1 15.2 20.6" stroke="#fff" stroke-width="1.3" fill="none"/><path d="M16.2 22.4L13.6 19.4L17.2 19Z" fill="#fff"/></svg>
<svg style="left:417px;top:80px" width="24" height="24" viewBox="0 0 24 24" ><path d="M10 0.2 V8.4" stroke="#c9ccc9" stroke-width="1.6"/><path d="M1 11 H23.4" stroke="#e0e0e0" stroke-width="1.4"/><path d="M10 12.6 V20" stroke="#e3c9c9" stroke-width="0.9"/><path d="M16 12.6 V22" stroke="#d9dcd9" stroke-width="1.6"/><path d="M16 21 V23.6" stroke="#bfc9bf" stroke-width="1.8"/><g fill="#f6f6f6" stroke="#c6c6c6" stroke-width="0.7"><rect x="8.4" y="9.4" width="3.2" height="3.2"/><rect x="14.4" y="9.4" width="3.2" height="3.2"/></g><ellipse cx="10" cy="19.4" rx="1" ry="1.4" fill="#f2f2f2" stroke="#d9cfcf" stroke-width="0.5"/><rect x="16.4" y="1.4" width="6.6" height="6.6" rx="1.06" fill="#d3cfc0"/><path d="M17.13 4.70L22.27 4.70M17.88 2.88L21.52 6.52M19.70 2.13L19.70 7.27M21.52 2.88L17.88 6.52" stroke="#fff" stroke-width="0.82" stroke-linecap="butt" fill="none"/><rect x="1.2" y="16.4" width="6.8" height="6.8" rx="1.6" fill="#e6d6d6"/><path d="M2.2 17.599999999999998 H7.0 L7.0 19.9 Q4.6 17.9 2.2 20.4Z" fill="#eee4e4" opacity="0.6"/><path d="M3.8 19.0L5.4 20.599999999999998M5.4 19.0L3.8 20.599999999999998" stroke="#fff" stroke-width="2.2" fill="none"/></svg>
<svg style="left:451px;top:80px" width="24" height="24" viewBox="0 0 24 24" ><path d="M10 1.6 Q4 0.2 1.8 4.8 Q0.4 9.4 4.6 12 Q7 13 8.8 11.6Z" fill="#dfe1df" stroke="#d0d3d0" stroke-width="0.7"/><path d="M13.4 1.8 Q19 0 21.6 4.4 Q23 9 19 11.8 Q16.6 12.8 14.6 11.6Z" fill="#dfe1df" stroke="#d0d3d0" stroke-width="0.7"/><path d="M15.4 0.8 L10.2 17.4 M9.6 1.2 L13.8 17" stroke="#d8d0d0" stroke-width="1.2" fill="none"/><path d="M15.4 0.8 L12 12 L13.2 12.4 L16.4 1.4Z" fill="#ececec" stroke="#d3d3d3" stroke-width="0.4"/><ellipse cx="8.8" cy="19.8" rx="2" ry="3.2" transform="rotate(28 8.8 19.8)" fill="none" stroke="#d9c9c9" stroke-width="1.2"/><ellipse cx="16.2" cy="18.8" rx="2" ry="3.2" transform="rotate(-32 16.2 18.8)" fill="none" stroke="#d9c9c9" stroke-width="1.2"/></svg>
<svg style="left:484px;top:80px" width="24" height="24" viewBox="0 0 24 24" ><path d="M10 1.6 Q4 0.2 1.8 4.8 Q0.4 9.4 4.6 12 Q7 13 8.8 11.6Z" fill="#dfe1df" stroke="#d0d3d0" stroke-width="0.7"/><path d="M13.4 1.8 Q19 0 21.6 4.4 Q23 9 19 11.8 Q16.6 12.8 14.6 11.6Z" fill="#dfe1df" stroke="#d0d3d0" stroke-width="0.7"/><path d="M15.4 0.8 L10.2 17.4 M9.6 1.2 L13.8 17" stroke="#d8d0d0" stroke-width="1.2" fill="none"/><path d="M15.4 0.8 L12 12 L13.2 12.4 L16.4 1.4Z" fill="#ececec" stroke="#d3d3d3" stroke-width="0.4"/><ellipse cx="8.8" cy="19.8" rx="2" ry="3.2" transform="rotate(28 8.8 19.8)" fill="none" stroke="#d9c9c9" stroke-width="1.2"/><ellipse cx="16.2" cy="18.8" rx="2" ry="3.2" transform="rotate(-32 16.2 18.8)" fill="none" stroke="#d9c9c9" stroke-width="1.2"/></svg>
<svg style="left:517px;top:80px" width="24" height="24" viewBox="0 0 24 24" ><path d="M9.6 2.2 Q4 0.4 1.6 4.6 Q0 9 4 11.8 Q6.8 13 9 11.6Z" fill="#dfe1df" stroke="#d0d3d0" stroke-width="0.7"/><path d="M13.6 2.4 Q19 0.6 21.4 5 Q22.6 9.4 18.6 11.6 Q16 12.4 14 11Z" fill="#dfe1df" stroke="#d0d3d0" stroke-width="0.7"/><path d="M8 4.6 H15.4 M8 6.8 H15.4 M8 9 H15.4" stroke="#f2f2f2" stroke-width="1.1"/><path d="M8.6 4.6 H14.8 M8.6 6.8 H14.8 M8.6 9 H14.8" stroke="#d4d4d4" stroke-width="0.5"/><path d="M5.6 11.8 Q7 15.6 13.2 20.4" fill="none" stroke="#cfcfcf" stroke-width="0.9"/></svg>
<svg style="left:550.6px;top:80px" width="24" height="24" viewBox="0 0 24 24" ><path d="M0.6 2.4H20.6M0.6 7.6H20.6" stroke="#d9d9d9" stroke-width="0.8" fill="none"/><path d="M9.6 7.6 V5.199999999999999 Q9.4 4.2 7.4 4.4 M11.6 7.6 V5.199999999999999 Q11.8 4.2 13.8 4.4" stroke="#cfcfcf" stroke-width="0.7" fill="none"/><path d="M6 4.5l1.8 -0.9v1.8z M15.2 4.5l-1.8 -0.9v1.8z" fill="#cfcfcf"/><path d="M0.6 9.4H20.6M0.6 14.600000000000001H20.6" stroke="#d9d9d9" stroke-width="0.8" fill="none"/><path d="M9.6 14.600000000000001 V12.2 Q9.4 11.200000000000001 7.4 11.4 M11.6 14.600000000000001 V12.2 Q11.8 11.200000000000001 13.8 11.4" stroke="#cfcfcf" stroke-width="0.7" fill="none"/><path d="M6 11.5l1.8 -0.9v1.8z M15.2 11.5l-1.8 -0.9v1.8z" fill="#cfcfcf"/><path d="M0.6 16.4H20.6M0.6 21.599999999999998H20.6" stroke="#d9d9d9" stroke-width="0.8" fill="none"/><path d="M9.6 21.599999999999998 V19.2 Q9.4 18.2 7.4 18.4 M11.6 21.599999999999998 V19.2 Q11.8 18.2 13.8 18.4" stroke="#cfcfcf" stroke-width="0.7" fill="none"/><path d="M6 18.5l1.8 -0.9v1.8z M15.2 18.5l-1.8 -0.9v1.8z" fill="#cfcfcf"/></svg>
<svg style="left:583px;top:80px" width="24" height="24" viewBox="0 0 24 24" ><path d="M11.6 0.8 L20.4 5.6 L11.6 10.4Z" fill="#8cc48c" stroke="#5aa05f" stroke-width="0.7"/><path d="M11.8 10.6 L16.8 21.6 H6.8Z" fill="#fafafa" stroke="#c4c4c4" stroke-width="0.9"/><path d="M6.4 18.4 Q-0.4 10.6 7.4 3.4" fill="none" stroke="#3c3c3c" stroke-width="0.85"/><path d="M5.8 1.6 L10 2.2 L7.6 5.4Z" fill="#3c3c3c"/></svg>
<svg style="left:612.2px;top:90.2px" width="7.8" height="4.2" viewBox="0 0 7.8 4.2" ><path d="M0 0H7.8L3.9 4.2Z" fill="#484848"/></svg>
<svg style="left:631.2px;top:84px" width="4.2" height="17.849999999999998" viewBox="0 0 4.2 17.849999999999998" ><rect x="0.2" y="0.0" width="1" height="1" fill="#b6b6b6"/><rect x="2.8000000000000003" y="0.0" width="1" height="1" fill="#b6b6b6"/><rect x="0.2" y="2.55" width="1" height="1" fill="#b6b6b6"/><rect x="2.8000000000000003" y="2.55" width="1" height="1" fill="#b6b6b6"/><rect x="0.2" y="5.1" width="1" height="1" fill="#b6b6b6"/><rect x="2.8000000000000003" y="5.1" width="1" height="1" fill="#b6b6b6"/><rect x="0.2" y="7.6499999999999995" width="1" height="1" fill="#b6b6b6"/><rect x="2.8000000000000003" y="7.6499999999999995" width="1" height="1" fill="#b6b6b6"/><rect x="0.2" y="10.2" width="1" height="1" fill="#b6b6b6"/><rect x="2.8000000000000003" y="10.2" width="1" height="1" fill="#b6b6b6"/><rect x="0.2" y="12.75" width="1" height="1" fill="#b6b6b6"/><rect x="2.8000000000000003" y="12.75" width="1" height="1" fill="#b6b6b6"/><rect x="0.2" y="15.299999999999999" width="1" height="1" fill="#b6b6b6"/><rect x="2.8000000000000003" y="15.299999999999999" width="1" height="1" fill="#b6b6b6"/></svg>
<svg style="left:644px;top:80px" width="24" height="24" viewBox="0 0 24 24" ><g transform="rotate(-45 12 12)"><path d="M4.2 3 V12.4 A7.8 7.8 0 0 0 19.8 12.4 V3 H14.6 V12.2 A2.6 2.6 0 0 1 9.4 12.2 V3Z" fill="#cf0a0a" stroke="#8a0000" stroke-width="0.5"/><rect x="4.9" y="3.6" width="3.8" height="3.4" fill="#f7f7f7"/><rect x="15.3" y="3.6" width="3.8" height="3.4" fill="#f7f7f7"/><path d="M6.2 12.4 A5.8 5.8 0 0 0 10 17.8" fill="none" stroke="#f04a4a" stroke-width="1" opacity="0.8"/></g></svg>
<svg style="left:679px;top:80px" width="24" height="24" viewBox="0 0 24 24" ><path d="M3 1.8 L8 12 L13 2.8 H18.4 M8 12 L12.6 8.8 H18.4 M8 12 V18.6 M3 8.2 L8 12" fill="none" stroke="#d8dcd8" stroke-width="1.3"/><g fill="#f0f0f0" stroke="#d4d4d4" stroke-width="0.6"><circle cx="3" cy="1.8" r="1.6"/><circle cx="3" cy="8.2" r="1.4"/><rect x="11.6" y="1.6" width="2.6" height="2.6"/><rect x="17.2" y="1.6" width="2.6" height="2.6"/><rect x="11.4" y="7.6" width="2.6" height="2.6"/><rect x="17.2" y="7.6" width="2.6" height="2.6"/><rect x="6.6" y="10.6" width="2.8" height="2.8"/><rect x="6.6" y="17.4" width="2.8" height="2.8"/></g></svg>
<svg style="left:696.2px;top:101.6px" width="5.2" height="2.4" viewBox="0 0 5.2 2.4" ><path d="M0 0H5.2L2.6 2.4Z" fill="#a9a9a9"/></svg>
<div class="abs" style="left:705px;top:77px;width:32px;height:30.8px;box-sizing:border-box;border:1px solid #c9c9c9;border-radius:3px;background:#dcdcdc"></div>
<svg style="left:709px;top:80px" width="24" height="24" viewBox="0 0 24 24" ><g fill="#e4e4e4" stroke="#c4c4c4" stroke-width="0.7"><rect x="4.4" y="4.4" width="3.4" height="3.4"/><rect x="16.4" y="6.4" width="3.4" height="3.4"/><rect x="10.4" y="16.4" width="3.4" height="3.4"/></g></svg>
<svg style="left:729.6px;top:101.6px" width="5.4" height="2.4" viewBox="0 0 5.4 2.4" ><path d="M0 0H5.4L2.7 2.4Z" fill="#a9a9a9"/></svg>
<div class="abs" style="left:738.4px;top:82.4px;width:83px;height:19.2px;box-sizing:border-box;border:1px solid #b5b5b5;border-radius:2.5px;background:linear-gradient(#ececec,#f2f2f2 40%)"></div><div class="abs" style="left:807px;top:83.4px;width:13.4px;height:17.2px;background:#f4f4f4;border-radius:0 2px 2px 0"></div><div class="abs" style="left:743.4px;top:85.7px;font-size:10.6px;line-height:14px;color:#7d7d85;letter-spacing:0.3px">12</div>
<svg style="left:810.8px;top:86.4px" width="6.8" height="3.8" viewBox="0 0 6.8 3.8" ><path d="M0 3.8L3.4 0L6.8 3.8Z" fill="#a6a6a6"/></svg>
<svg style="left:810.8px;top:94.2px" width="6.8" height="3.8" viewBox="0 0 6.8 3.8" ><path d="M0 0H6.8L3.4 3.8Z" fill="#a6a6a6"/></svg>
<div class="abs" style="left:823.6px;top:81.6px;width:88.2px;height:20.8px;box-sizing:border-box;border:1px solid #b9b9b9;border-radius:2.5px;background:linear-gradient(#f6f6f6,#f0f0f0)"></div><div class="abs" style="left:828.6px;top:85.2px;font-size:10.6px;line-height:14px;color:#7d7d85;letter-spacing:0.3px">px</div>
<svg style="left:897.2px;top:90.2px" width="6.8" height="3.6" viewBox="0 0 6.8 3.6" ><path d="M0 0H6.8L3.4 3.6Z" fill="#9c9c9c"/></svg>
<svg style="left:916px;top:80px" width="24" height="24" viewBox="0 0 24 24" ><path d="M10 10.8 L4.8 1.6 M10 10.8 L23.4 6 M10 10.8 V22.6" stroke="#6fc070" stroke-width="1.7" fill="none"/><rect x="8" y="8.8" width="4" height="4" fill="#c9c9c9" stroke="#7a7a7a" stroke-width="0.7"/></svg>
<svg style="left:950px;top:80px" width="24" height="24" viewBox="0 0 24 24" ><path d="M8.6 2.2 Q13 0.6 18.4 2.6 Q22.8 2.2 23 6 Q23 10 19.4 11 Q16.4 11.4 14.4 9Z" fill="#bdbdbd" stroke="#5c5c5c" stroke-width="0.7"/><path d="M1.4 6.6 Q1.6 2.4 6 1.8 Q10 1.8 12.4 5.4 Q14.4 9.2 15.4 13.6 Q17.6 17.6 16.6 20.6 Q15 23 11.6 22.6 Q8.4 21.6 8 18 Q8 14.6 5.4 12.6 Q1.6 10.6 1.4 6.6Z" fill="#8fcc8c" stroke="#3f4f3f" stroke-width="0.9"/><path d="M8.4 10.8l0.5 -1l0.5 1M11 10.8l0.5 -1l0.5 1" stroke="#5a8a5a" stroke-width="0.5" fill="none"/></svg>
<svg style="left:970.6px;top:101.6px" width="5.2" height="2.4" viewBox="0 0 5.2 2.4" ><path d="M0 0H5.2L2.6 2.4Z" fill="#484848"/></svg>
<svg style="left:9px;top:119px" width="24" height="24" viewBox="0 0 24 24" ><circle cx="9.8" cy="10.4" r="8" fill="none" stroke="#d9dcd9" stroke-width="2.6"/><rect x="13.1" y="2.5" width="2.6" height="2.6" fill="#f2f2f2" stroke="#d2d2d2" stroke-width="0.6"/><rect x="2.9000000000000004" y="14.299999999999999" width="2.6" height="2.6" fill="#f2f2f2" stroke="#d2d2d2" stroke-width="0.6"/><rect x="13" y="13" width="10.8" height="10.8" rx="1.51" fill="#cdc9bd"/><path d="M18.40 14.40L18.40 22.40M21.86 16.40L14.94 20.40M21.86 20.40L14.94 16.40" stroke="#fff" stroke-width="1.51" stroke-linecap="butt" fill="none"/><circle cx="18.4" cy="18.4" r="2.16" fill="#fff"/><circle cx="18.4" cy="18.4" r="0.86" fill="#cdc9bd"/></svg>
<svg style="left:39.4px;top:129.6px" width="7.6" height="4" viewBox="0 0 7.6 4" ><path d="M0 0H7.6L3.8 4Z" fill="#9e9e9e"/></svg>
<svg style="left:54px;top:119px" width="24" height="24" viewBox="0 0 24 24" ><ellipse cx="11" cy="9.4" rx="9.8" ry="5.6" transform="rotate(-18 11 9.4)" fill="none" stroke="#d9dcd9" stroke-width="2.4"/><ellipse cx="9.4" cy="6.4" rx="2.4" ry="1.6" fill="none" stroke="#d8dad8" stroke-width="0.8"/><rect x="7.7" y="3.1000000000000005" width="2.6" height="2.6" fill="#f2f2f2" stroke="#d2d2d2" stroke-width="0.6"/><rect x="9.299999999999999" y="7.3" width="2.6" height="2.6" fill="#f2f2f2" stroke="#d2d2d2" stroke-width="0.6"/><rect x="1.3" y="12.1" width="2.6" height="2.6" fill="#f2f2f2" stroke="#d2d2d2" stroke-width="0.6"/><rect x="12.6" y="13" width="10.8" height="10.8" rx="1.51" fill="#cdc9bd"/><path d="M18.00 14.40L18.00 22.40M21.46 16.40L14.54 20.40M21.46 20.40L14.54 16.40" stroke="#fff" stroke-width="1.51" stroke-linecap="butt" fill="none"/><circle cx="18.0" cy="18.4" r="2.16" fill="#fff"/><circle cx="18.0" cy="18.4" r="0.86" fill="#cdc9bd"/></svg>
<svg style="left:84.2px;top:129.6px" width="7.6" height="4" viewBox="0 0 7.6 4" ><path d="M0 0H7.6L3.8 4Z" fill="#9e9e9e"/></svg>
<svg style="left:99px;top:119px" width="24" height="24" viewBox="0 0 24 24" ><rect x="3.4" y="3.4" width="16.6" height="12.6" fill="none" stroke="#d9dcd9" stroke-width="2.8"/><rect x="18.7" y="1.7" width="2.6" height="2.6" fill="#f2f2f2" stroke="#d2d2d2" stroke-width="0.6"/><rect x="10.5" y="7.5" width="3" height="3" fill="#f2f2f2" stroke="#d2d2d2" stroke-width="0.6"/><rect x="13.2" y="13" width="10.8" height="10.8" rx="1.51" fill="#cdc9bd"/><path d="M18.60 14.40L18.60 22.40M22.06 16.40L15.14 20.40M22.06 20.40L15.14 16.40" stroke="#fff" stroke-width="1.51" stroke-linecap="butt" fill="none"/><circle cx="18.6" cy="18.4" r="2.16" fill="#fff"/><circle cx="18.6" cy="18.4" r="0.86" fill="#cdc9bd"/></svg>
<svg style="left:129.4px;top:129.6px" width="7.6" height="4" viewBox="0 0 7.6 4" ><path d="M0 0H7.6L3.8 4Z" fill="#9e9e9e"/></svg>
<svg style="left:144px;top:119px" width="24" height="24" viewBox="0 0 24 24" ><path d="M9.2 2 L19.4 4.4 L19.4 14 L9.6 19 L2.4 10.6Z" fill="none" stroke="#d9dcd9" stroke-width="2.8" stroke-linejoin="round"/><rect x="7.8999999999999995" y="0.7" width="2.6" height="2.6" fill="#f2f2f2" stroke="#d2d2d2" stroke-width="0.6"/><rect x="1.3" y="9.299999999999999" width="2.6" height="2.6" fill="#f2f2f2" stroke="#d2d2d2" stroke-width="0.6"/><rect x="13.2" y="13" width="10.8" height="10.8" rx="1.51" fill="#cdc9bd"/><path d="M18.60 14.40L18.60 22.40M22.06 16.40L15.14 20.40M22.06 20.40L15.14 16.40" stroke="#fff" stroke-width="1.51" stroke-linecap="butt" fill="none"/><circle cx="18.6" cy="18.4" r="2.16" fill="#fff"/><circle cx="18.6" cy="18.4" r="0.86" fill="#cdc9bd"/></svg>
<svg style="left:174.4px;top:129.6px" width="7.6" height="4" viewBox="0 0 7.6 4" ><path d="M0 0H7.6L3.8 4Z" fill="#9e9e9e"/></svg>
<svg style="left:193.2px;top:123px" width="4.2" height="17.849999999999998" viewBox="0 0 4.2 17.849999999999998" ><rect x="0.2" y="0.0" width="1" height="1" fill="#b6b6b6"/><rect x="2.8000000000000003" y="0.0" width="1" height="1" fill="#b6b6b6"/><rect x="0.2" y="2.55" width="1" height="1" fill="#b6b6b6"/><rect x="2.8000000000000003" y="2.55" width="1" height="1" fill="#b6b6b6"/><rect x="0.2" y="5.1" width="1" height="1" fill="#b6b6b6"/><rect x="2.8000000000000003" y="5.1" width="1" height="1" fill="#b6b6b6"/><rect x="0.2" y="7.6499999999999995" width="1" height="1" fill="#b6b6b6"/><rect x="2.8000000000000003" y="7.6499999999999995" width="1" height="1" fill="#b6b6b6"/><rect x="0.2" y="10.2" width="1" height="1" fill="#b6b6b6"/><rect x="2.8000000000000003" y="10.2" width="1" height="1" fill="#b6b6b6"/><rect x="0.2" y="12.75" width="1" height="1" fill="#b6b6b6"/><rect x="2.8000000000000003" y="12.75" width="1" height="1" fill="#b6b6b6"/><rect x="0.2" y="15.299999999999999" width="1" height="1" fill="#b6b6b6"/><rect x="2.8000000000000003" y="15.299999999999999" width="1" height="1" fill="#b6b6b6"/></svg>
<svg style="left:205px;top:119px" width="24" height="24" viewBox="0 0 24 24" ><g fill="none" stroke="#cfcfcf" stroke-width="0.9"><rect x="1.4" y="1.6" width="21" height="12"/><rect x="1.4" y="13.6" width="12" height="9"/><path d="M1.4 18H13.4M1.4 1.6L13.4 13.6M13.4 1.6L1.4 13.6M13.4 1.6V13.6"/></g><path d="M7.6 19.4 L16.2 1.8 L20.8 4 L12.2 21.6Z" fill="#e6dfdb" stroke="#cfc6c1" stroke-width="0.5"/><path d="M16.2 1.8 L17 0.2 L21.6 2.4 L20.8 4Z" fill="#f1f1f1" stroke="#d5d5d5" stroke-width="0.4"/><path d="M7.6 19.4 L12.2 21.6 L6.8 23.8Z" fill="#e4e4e4" stroke="#cfcfcf" stroke-width="0.4"/><path d="M6.8 23.8 L7.5 21.6 L9 22.7Z" fill="#bdbdbd"/></svg>
<svg style="left:238px;top:119px" width="24" height="24" viewBox="0 0 24 24" ><rect x="0.8" y="0.6" width="22.4" height="12.6" fill="#e0ded3" stroke="#d3d1c7" stroke-width="0.6"/><path d="M0.8 0.6L13 13.2M13 0.6V13.2M13 8L23.2 0.6M13 13.2L23.2 8" stroke="#efeee8" stroke-width="0.7" fill="none"/><g fill="none" stroke="#d2d2d2" stroke-width="0.9"><rect x="0.8" y="13.2" width="13" height="8.6"/><path d="M0.8 17.6H13.8M7 13.2V21.8"/></g><path d="M5 3.2 L23.2 14 L17.6 15.6 L22.6 21.8 L20 23.6 L15.4 17.4 L12.4 20.4Z" fill="#f6f6f4" stroke="#c6c6c6" stroke-width="0.9" stroke-linejoin="round"/></svg>
<svg style="left:268.2px;top:129.6px" width="7.6" height="4" viewBox="0 0 7.6 4" ><path d="M0 0H7.6L3.8 4Z" fill="#9e9e9e"/></svg>
<svg style="left:284px;top:119px" width="24" height="24" viewBox="0 0 24 24" ><g fill="none" stroke="#cbcbcb" stroke-width="0.9"><rect x="1.2" y="1.6" width="7.2" height="7.2"/><path d="M1.2 1.6L8.4 8.8M8.4 1.6L1.2 8.8"/><rect x="1.2" y="13.4" width="7.6" height="8.4"/><path d="M1.2 13.4L8.8 21.8M8.8 13.4L1.2 21.8"/><path d="M15.6 0.6L21.4 5.2L15.6 10.2L11 5.2ZM15.6 0.6V10.2M11 5.2H21.4"/></g><path d="M20.6 12.6 Q19.4 10.4 16.6 10.6 Q13.4 11 13.6 13.6 Q13.8 15.8 17 15.8 Q12 16.2 12.2 19.6 Q12.6 22.6 16.6 22.4 Q19.8 22 21.4 19.4" fill="none" stroke="#d2d2d8" stroke-width="1.7"/></svg>
<svg style="left:316px;top:119px" width="24" height="24" viewBox="0 0 24 24" ><g fill="none" stroke="#cfcfcf" stroke-width="0.8"><rect x="1.6" y="2" width="21.2" height="20.4"/><path d="M1.6 22.4L9 16.6L22.8 22.4M9 16.6L22.8 18M22.8 2L16 2"/></g><path d="M2.6 2 L9 16.4 L15.6 2 L22 2.4" fill="none" stroke="#d6cec2" stroke-width="1.4"/><g fill="#fbfbfb" stroke="#d4ccc0" stroke-width="0.6"><path d="M2.6 0.2L4.4 2L2.6 3.8L0.8 2Z"/><path d="M15.6 0.2L17.4 2L15.6 3.8L13.8 2Z"/><path d="M22 0.6L23.8 2.4L22 4.2L20.2 2.4Z"/><rect x="7.6" y="15" width="2.8" height="2.8"/></g></svg>
<svg style="left:346.4px;top:129.6px" width="7.6" height="4" viewBox="0 0 7.6 4" ><path d="M0 0H7.6L3.8 4Z" fill="#9e9e9e"/></svg>
<svg style="left:365.2px;top:123px" width="4.2" height="17.849999999999998" viewBox="0 0 4.2 17.849999999999998" ><rect x="0.2" y="0.0" width="1" height="1" fill="#b6b6b6"/><rect x="2.8000000000000003" y="0.0" width="1" height="1" fill="#b6b6b6"/><rect x="0.2" y="2.55" width="1" height="1" fill="#b6b6b6"/><rect x="2.8000000000000003" y="2.55" width="1" height="1" fill="#b6b6b6"/><rect x="0.2" y="5.1" width="1" height="1" fill="#b6b6b6"/><rect x="2.8000000000000003" y="5.1" width="1" height="1" fill="#b6b6b6"/><rect x="0.2" y="7.6499999999999995" width="1" height="1" fill="#b6b6b6"/><rect x="2.8000000000000003" y="7.6499999999999995" width="1" height="1" fill="#b6b6b6"/><rect x="0.2" y="10.2" width="1" height="1" fill="#b6b6b6"/><rect x="2.8000000000000003" y="10.2" width="1" height="1" fill="#b6b6b6"/><rect x="0.2" y="12.75" width="1" height="1" fill="#b6b6b6"/><rect x="2.8000000000000003" y="12.75" width="1" height="1" fill="#b6b6b6"/><rect x="0.2" y="15.299999999999999" width="1" height="1" fill="#b6b6b6"/><rect x="2.8000000000000003" y="15.299999999999999" width="1" height="1" fill="#b6b6b6"/></svg>
<svg style="left:378px;top:119px" width="24" height="24" viewBox="0 0 24 24" ><path d="M1.6 3.2 H11.4 L14.4 9.6 L20.8 12" fill="none" stroke="#2f6fb0" stroke-width="0.9"/><g fill="#fff" stroke="#2f6fb0" stroke-width="0.7"><circle cx="1.8" cy="3.2" r="1.1"/><circle cx="11.4" cy="3.2" r="1.1"/><circle cx="14.4" cy="9.6" r="1.1"/><circle cx="20.8" cy="12" r="1.1"/></g><path d="M18.4 0.6l0.95 2.1l2.3 0.2l-1.75 1.5l0.55 2.25l-2.05 -1.2l-2.05 1.2l0.55 -2.25l-1.75 -1.5l2.3 -0.2z" fill="#4a82c0" stroke="#24528a" stroke-width="0.5"/><text x="0.2" y="18.4" font-family="Liberation Sans, sans-serif" font-weight="bold" font-size="17" fill="#5b8cc6" stroke="#254f85" stroke-width="0.7">A</text><rect x="14.2" y="14.2" width="9" height="9" rx="1.44" fill="#c9a40e"/><path d="M15.19 18.70L22.21 18.70M16.22 16.22L21.18 21.18M18.70 15.19L18.70 22.21M21.18 16.22L16.22 21.18" stroke="#fff" stroke-width="1.12" stroke-linecap="butt" fill="none"/></svg>
<svg style="left:407.6px;top:129.6px" width="7.6" height="4" viewBox="0 0 7.6 4" ><path d="M0 0H7.6L3.8 4Z" fill="#484848"/></svg>
<svg style="left:423px;top:119px" width="24" height="24" viewBox="0 0 24 24" ><rect x="2.6" y="3" width="14.8" height="14" fill="none" stroke="#444" stroke-width="0.8" stroke-dasharray="1 1.4"/><g fill="#f4f4f4" stroke="#555" stroke-width="0.7"><rect x="1.2" y="1.6" width="3" height="3"/><rect x="15.8" y="1.6" width="3" height="3"/><rect x="1.2" y="15.4" width="3" height="3"/><rect x="15.8" y="15.4" width="3" height="3"/></g><path d="M4.6 2.4 L18.6 13.2 L13.6 13.8 L17.6 21 L15 22.6 L11 15.4 L7.6 19Z" fill="#fff" stroke="#111" stroke-width="0.9" stroke-linejoin="round"/></svg>
<svg style="left:456px;top:119px" width="24" height="24" viewBox="0 0 24 24" ><path d="M3 3.6 L18.4 3 L10 20.5 L2.5 16.1Z" fill="none" stroke="#222" stroke-width="1.1"/><circle cx="3" cy="3.6" r="2.8" fill="#2a7bf2"/><circle cx="18.4" cy="3" r="2.8" fill="#2a7bf2"/><circle cx="2.5" cy="16.1" r="2.8" fill="#2a7bf2"/><circle cx="10" cy="20.5" r="2.8" fill="#2a7bf2"/><rect x="14" y="14.9" width="9" height="9" rx="1.5" fill="#4f8f4f"/><path d="M18.5 16.5V22.299999999999997M15.6 19.4H21.4" stroke="#fff" stroke-width="1.9" fill="none"/></svg>
<svg style="left:489px;top:119px" width="24" height="24" viewBox="0 0 24 24" ><path d="M19.5 4 L5.8 3 L2.5 12 L8.5 20.8" fill="none" stroke="#222" stroke-width="1.1"/><circle cx="5.8" cy="3" r="2.8" fill="#2a7bf2"/><circle cx="19.5" cy="4" r="2.8" fill="#2a7bf2"/><circle cx="2.5" cy="12" r="2.8" fill="#2a7bf2"/><circle cx="8.5" cy="20.8" r="2.8" fill="#2a7bf2"/><rect x="14" y="14.9" width="9" height="9" rx="1.5" fill="#4f8f4f"/><path d="M18.5 16.5V22.299999999999997M15.6 19.4H21.4" stroke="#fff" stroke-width="1.9" fill="none"/></svg>
<svg style="left:522px;top:119px" width="24" height="24" viewBox="0 0 24 24" ><path d="M11 2.6 L13.6 8.6 L20.6 9.2 L15.4 13.8 L17.2 21.2 L11 17.2 L4.8 21.2 L6.6 13.8 L1.4 9.2 L8.4 8.6Z" fill="#fbe6ae" stroke="#f2b36c" stroke-width="0.9" stroke-linejoin="round"/><rect x="14.2" y="14.9" width="9" height="9" rx="1.5" fill="#4f8f4f"/><path d="M18.7 16.5V22.299999999999997M15.799999999999999 19.4H21.599999999999998" stroke="#fff" stroke-width="1.9" fill="none"/></svg>
<svg style="left:555px;top:119px" width="24" height="24" viewBox="0 0 24 24" ><rect x="2.2" y="17.4" width="3.2" height="3.2" fill="#d9d9d9" stroke="#8a8a8a" stroke-width="0.7"/><text x="5.4" y="17.4" font-family="Liberation Serif, serif" font-size="16.5" fill="#222">T</text><rect x="14" y="14.9" width="9" height="9" rx="1.5" fill="#4f8f4f"/><path d="M18.5 16.5V22.299999999999997M15.6 19.4H21.4" stroke="#fff" stroke-width="1.9" fill="none"/></svg>
<svg style="left:588px;top:119px" width="24" height="24" viewBox="0 0 24 24" ><g font-family="Liberation Sans, sans-serif" font-weight="bold" font-size="7.4" fill="#333"><text transform="translate(2.2 13) rotate(-22)">a</text><text transform="translate(8.6 10) rotate(-8)">b</text><text x="15.4" y="9.4">c</text></g><path d="M2.6 19.4 Q9 13.4 19.4 14" stroke="#9a9a9a" stroke-width="0.6" stroke-dasharray="0.8 1.6" fill="none"/><g fill="#e2e2e2" stroke="#8a8a8a" stroke-width="0.6"><rect x="1.2" y="17" width="3" height="3"/><rect x="9.2" y="13" width="3" height="3"/><rect x="18.2" y="11" width="3" height="3"/></g><rect x="14.2" y="14.9" width="9" height="9" rx="1.5" fill="#4f8f4f"/><path d="M18.7 16.5V22.299999999999997M15.799999999999999 19.4H21.599999999999998" stroke="#fff" stroke-width="1.9" fill="none"/></svg>
<svg style="left:621px;top:119px" width="24" height="24" viewBox="0 0 24 24" ><rect x="2" y="2" width="18" height="18.4" fill="#e9eff7" stroke="#a9a9a9" stroke-width="0.9"/><text x="5.2" y="17.4" font-family="Liberation Serif, serif" font-size="16.5" fill="#222">T</text><rect x="14" y="14.9" width="9" height="9" rx="1.5" fill="#4f8f4f"/><path d="M18.5 16.5V22.299999999999997M15.6 19.4H21.4" stroke="#fff" stroke-width="1.9" fill="none"/></svg>
<svg style="left:654px;top:119px" width="24" height="24" viewBox="0 0 24 24" ><rect x="1.2" y="5.2" width="19.8" height="13.4" fill="url(#gSky)" stroke="#8e8e8e" stroke-width="0.8"/><path d="M1.6 13 L8 8.8 L20.6 13.4 V18.2 H1.6Z" fill="url(#gSand)"/><rect x="14" y="14.9" width="9" height="9" rx="1.5" fill="#4f8f4f"/><path d="M18.5 16.5V22.299999999999997M15.6 19.4H21.4" stroke="#fff" stroke-width="1.9" fill="none"/></svg>
<div class="abs" style="left:685.4px;top:122px;width:1px;height:19px;background:#c9c9c9"></div>
<svg style="left:693px;top:119px" width="24" height="24" viewBox="0 0 24 24" ><path d="M1.4 1 H22.6 V16.4 H10.4 L1.6 23 L5 16.4 H1.4Z" fill="#e9eff5" stroke="#9a9a9a" stroke-width="0.8" stroke-linejoin="round"/><path d="M4 4.4H9.4M4 7.4H8M4 10.4H9.4M4 13.4H11" stroke="#3d83d6" stroke-width="1.3"/><path d="M12.8 4 L9.8 7.6 L12.8 11.2 M17 4 L20 7.6 L17 11.2 M15.8 3 L14 12.2" stroke="#111" stroke-width="1" fill="none"/></svg>
<svg style="left:723.2px;top:129.6px" width="7.6" height="4" viewBox="0 0 7.6 4" ><path d="M0 0H7.6L3.8 4Z" fill="#484848"/></svg>
<svg style="left:742.2px;top:123px" width="4.2" height="17.849999999999998" viewBox="0 0 4.2 17.849999999999998" ><rect x="0.2" y="0.0" width="1" height="1" fill="#b6b6b6"/><rect x="2.8000000000000003" y="0.0" width="1" height="1" fill="#b6b6b6"/><rect x="0.2" y="2.55" width="1" height="1" fill="#b6b6b6"/><rect x="2.8000000000000003" y="2.55" width="1" height="1" fill="#b6b6b6"/><rect x="0.2" y="5.1" width="1" height="1" fill="#b6b6b6"/><rect x="2.8000000000000003" y="5.1" width="1" height="1" fill="#b6b6b6"/><rect x="0.2" y="7.6499999999999995" width="1" height="1" fill="#b6b6b6"/><rect x="2.8000000000000003" y="7.6499999999999995" width="1" height="1" fill="#b6b6b6"/><rect x="0.2" y="10.2" width="1" height="1" fill="#b6b6b6"/><rect x="2.8000000000000003" y="10.2" width="1" height="1" fill="#b6b6b6"/><rect x="0.2" y="12.75" width="1" height="1" fill="#b6b6b6"/><rect x="2.8000000000000003" y="12.75" width="1" height="1" fill="#b6b6b6"/><rect x="0.2" y="15.299999999999999" width="1" height="1" fill="#b6b6b6"/><rect x="2.8000000000000003" y="15.299999999999999" width="1" height="1" fill="#b6b6b6"/></svg>
<svg style="left:754px;top:119px" width="24" height="24" viewBox="0 0 24 24" ><rect x="0.4" y="0" width="23.2" height="23.6" fill="#f8f8f8"/><g fill="#0a0a0a"><rect x="2.6" y="11.9" width="2.9" height="6.9"/><rect x="6.3" y="9.4" width="2.9" height="9.4"/><rect x="10.2" y="6.9" width="2.9" height="11.9"/><rect x="14" y="4.1" width="2.9" height="14.7"/><rect x="17.8" y="1.2" width="2.9" height="17.6"/><rect x="1.2" y="19.6" width="21.6" height="1.5"/></g></svg>
<svg style="left:787px;top:119px" width="24" height="24" viewBox="0 0 24 24" ><rect x="0" y="0" width="24.2" height="24" fill="#fafafa"/><g fill="none" stroke="#161616"><polygon points="12.00,1.20 23.41,9.49 19.05,22.91 4.95,22.91 0.59,9.49" stroke-width="1"/><polygon points="12.00,4.20 20.56,10.42 17.29,20.48 6.71,20.48 3.44,10.42" stroke-width="0.7"/><polygon points="12.00,7.00 17.90,11.28 15.64,18.22 8.36,18.22 6.10,11.28" stroke-width="0.6"/><polygon points="12.00,9.80 15.23,12.15 14.00,15.95 10.00,15.95 8.77,12.15" stroke-width="0.5"/><path d="M12 13.2L12 1.2M12 13.2L23.4 9.5M12 13.2L19 23M12 13.2L5 23M12 13.2L0.6 9.5" stroke-width="0.4"/></g></svg>
<svg style="left:19px;top:177px" width="17" height="16" viewBox="0 0 17 16" ><g transform="rotate(24 7 9)"><rect x="1.4" y="4" width="9.6" height="3.2" fill="#f3d23b"/><rect x="1.4" y="7.2" width="9.6" height="3" fill="#4b7fd0"/><rect x="1.4" y="10.2" width="9.6" height="3" fill="#e2433f"/></g><path d="M8.4 8.2 L11.8 6.4 L14.6 10.6 L10.4 13.8 L6.6 11.6Z" fill="#d9a566" stroke="#a86f2c" stroke-width="0.5"/><path d="M12.2 7 L16 2.4" stroke="#d08a24" stroke-width="1.7" stroke-linecap="round"/></svg>
<svg style="left:45px;top:177px" width="16" height="16" viewBox="0 0 16 16" ><g fill="none" stroke="#6a6a6a" stroke-width="0.9"><path d="M0.8 10.6 V15.6 H7.6"/><path d="M2.8 8.2 V13.6 H8.4"/><rect x="4.8" y="2.6" width="8.2" height="9.4" fill="#f4f4f4"/></g><path d="M6.8 8.8 V2.2 Q6.8 0.6 8.2 0.6 Q9.6 0.6 9.6 2.2 V7.8" fill="none" stroke="#2f6fc0" stroke-width="1"/><rect x="8.2" y="10" width="6.2" height="6" rx="1" fill="#4fa05a"/><circle cx="11.3" cy="13" r="1.9" fill="#fff"/></svg>
<svg style="left:69.4px;top:177px" width="18" height="16" viewBox="0 0 18 16" ><path d="M0.6 7.4 Q7.6 0.6 15 7.6 Q8 13.4 0.6 7.4Z" fill="#fbfbfb" stroke="#8f8f8f" stroke-width="0.7"/><path d="M1.4 4.8 Q7.4 0.4 14 3.8" fill="none" stroke="#ababab" stroke-width="0.6"/><circle cx="7.4" cy="6.8" r="3.3" fill="#6d9ddb" stroke="#4274b4" stroke-width="0.4"/><circle cx="7.4" cy="6.6" r="1.4" fill="#0a0a0a"/><circle cx="8.3" cy="5.8" r="0.6" fill="#fff"/><path d="M11.8 12.8 H17.4 L14.6 16Z" fill="#3c3c3c"/></svg>
<svg style="left:95px;top:177px" width="18" height="16" viewBox="0 0 18 16" ><path d="M0.6 1.2 H14 L9 8.4 V15.4 L5.8 14 V8.4Z" fill="#6b9bd3" stroke="#3f6aa5" stroke-width="0.6" stroke-linejoin="round"/><rect x="0.8" y="0.6" width="13" height="2.2" fill="#f4d83a" stroke="#c0a41a" stroke-width="0.4"/><path d="M11.4 12.8 H17 L14.2 16Z" fill="#3c3c3c"/></svg>
<svg style="left:120px;top:177px" width="16" height="16" viewBox="0 0 16 16" ><text x="0" y="10" font-family="DejaVu Sans, Liberation Sans, sans-serif" font-size="14.5" fill="#6a2b7c">ε</text><path d="M7.6 8.2 H15.2 L13.6 11.4 V15.6 H9.4 V11.4Z" fill="#c9c9c9" stroke="#9a9a9a" stroke-width="0.5"/><path d="M10.4 9.4V15" stroke="#f1f1f1" stroke-width="0.9"/></svg>
<svg style="left:141.2px;top:183.2px" width="7.6" height="4" viewBox="0 0 7.6 4" ><path d="M0 0H7.6L3.8 4Z" fill="#484848"/></svg>
<svg style="left:157px;top:177.6px" width="16" height="16" viewBox="0 0 16 16" ><path d="M0.6 2 H7 M2.6 2 V12.6 H5 M2.6 6.2 H5" fill="none" stroke="#9a9a9a" stroke-width="0.8"/><rect x="4.4" y="4.6" width="3" height="3" fill="#ffd24a" stroke="#f08a00" stroke-width="0.8"/><rect x="4.4" y="10.8" width="3" height="3" fill="#ffd24a" stroke="#f08a00" stroke-width="0.8"/><path d="M9.4 0.8 H12.6 V8.6 H15.4 L11 14.4 L6.6 8.6 H9.4Z" fill="#4b7fbc" stroke="#2d568c" stroke-width="0.5"/></svg>
<svg style="left:182px;top:177.6px" width="16" height="16" viewBox="0 0 16 16" ><path d="M0.6 2 H7 M2.6 2 V12.6 H5 M2.6 6.2 H5" fill="none" stroke="#9a9a9a" stroke-width="0.8"/><rect x="4.4" y="4.6" width="3" height="3" fill="#ffd24a" stroke="#f08a00" stroke-width="0.8"/><rect x="4.4" y="10.8" width="3" height="3" fill="#ffd24a" stroke="#f08a00" stroke-width="0.8"/><path d="M9.4 14.2 H12.6 V6.4 H15.4 L11 0.6 L6.6 6.4 H9.4Z" fill="#4b7fbc" stroke="#2d568c" stroke-width="0.5"/></svg>
<svg style="left:206.6px;top:177px" width="16" height="16" viewBox="0 0 16 16" ><rect x="1" y="1.4" width="11.4" height="11.2" fill="#eeeeec" stroke="#888a85" stroke-width="1.1"/><rect x="8.6" y="10.2" width="6" height="5" rx="1.2" fill="#e8323c"/><rect x="9.8" y="12" width="3.6" height="1.4" fill="#fff"/></svg>
<div class="badge" style="left:250.1px;top:7px">2</div><div class="badge" style="left:363px;top:7px">3</div>


<div class="abs" style="left:10px;top:150.5px;width:1.4px;height:316.5px;background:#b2b2b2"></div>
<div class="abs t" style="left:15.5px;top:154.6px;letter-spacing:0">Layers</div>
<!-- float / close buttons -->
<svg style="left:377.5px;top:155.5px" width="11" height="10.5" viewBox="0 0 11 10.5"><rect x="0.5" y="0.5" width="10" height="9.5" rx="2" fill="#f6f6f6" stroke="#4a4a4a" stroke-width="0.8"/><rect x="4.2" y="2.4" width="4.2" height="3.8" rx="0.8" fill="none" stroke="#333" stroke-width="0.8"/><rect x="2.4" y="4.2" width="4.2" height="3.8" rx="0.8" fill="#f6f6f6" stroke="#333" stroke-width="0.8"/></svg>
<svg style="left:391px;top:155.5px" width="11" height="10.5" viewBox="0 0 11 10.5"><rect x="0.5" y="0.5" width="10" height="9.5" rx="2" fill="#f6f6f6" stroke="#4a4a4a" stroke-width="0.8"/><path d="M3 2.7 L8 7.8 M8 2.7 L3 7.8" stroke="#222" stroke-width="1.7"/></svg>
<!-- tree view -->
<div class="abs" style="left:11.4px;top:201px;width:393.6px;height:266px;background:#fff;border-top:1px solid #adadad;border-right:1px solid #adadad;box-sizing:border-box"></div>
<div class="abs" style="left:11.4px;top:202px;width:392.6px;height:18.3px;background:#f0f0f0"></div>
<div class="abs" style="left:35.0px;top:204.4px;width:13px;height:13px;box-sizing:border-box;border:1px solid #b8b8b8;background:#fff"></div><svg style="left:35.0px;top:204.4px" width="13" height="13" viewBox="0 0 13 13"><path d="M2.6 6.6 L5.2 9.8 L10.4 2.8" fill="none" stroke="#000" stroke-width="1.7"/></svg>
<svg style="left:56px;top:203px" width="14" height="16" viewBox="0 0 14 16"><path d="M1 15 L2.2 10.5 L4.5 12.5Z" fill="#bbb" stroke="#777" stroke-width="0.5"/><ellipse cx="6.8" cy="8.4" rx="4.6" ry="4.2" fill="#f08a1c" stroke="#c96a0a" stroke-width="0.7"/><path d="M2.6 11.2 L9.8 1.2 L12 2.8 L5 12.8Z" fill="#f2d23a" stroke="#a8892a" stroke-width="0.6"/><path d="M9.8 1.2 L11.5 0.4 L12.6 1.4 L12 2.8Z" fill="#cfcfcf" stroke="#888" stroke-width="0.4"/></svg>
<div class="abs lyr" style="left:77px;top:203px;font-style:normal;text-decoration:underline">wwtp</div>
<svg style="left:18.9px;top:226.5px" width="6.4" height="4" viewBox="0 0 6.4 4"><path d="M0 0 H6.4 V0.9 L3.9 4 H2.5 L0 0.9Z" fill="#505050"/></svg>
<div class="abs" style="left:35.0px;top:221.9px;width:13px;height:13px;box-sizing:border-box;border:1px solid #b8b8b8;background:#fff"></div>
<svg style="left:57px;top:222.9px" width="13" height="12.8" viewBox="0 0 3 3"><rect x="0" y="0" width="1.02" height="1.02" fill="#1f3651"/><rect x="1" y="0" width="1.02" height="1.02" fill="#a8c7e8"/><rect x="2" y="0" width="1.02" height="1.02" fill="#1f3651"/><rect x="0" y="1" width="1.02" height="1.02" fill="#a8c7e8"/><rect x="1" y="1" width="1.02" height="1.02" fill="#1f3651"/><rect x="2" y="1" width="1.02" height="1.02" fill="#a8c7e8"/><rect x="0" y="2" width="1.02" height="1.02" fill="#1f3651"/><rect x="1" y="2" width="1.02" height="1.02" fill="#a8c7e8"/><rect x="0.22" y="0.22" width="0.56" height="0.56" fill="#16283f"/><rect x="2.22" y="0.22" width="0.56" height="0.56" fill="#16283f"/><rect x="1.22" y="1.22" width="0.56" height="0.56" fill="#16283f"/><rect x="0.22" y="2.22" width="0.56" height="0.56" fill="#16283f"/></svg>
<div class="abs lyr g" style="left:78px;top:220.5px">DEM_5m</div>
<div class="abs t" style="left:55px;top:238.6px">Band 1 (Gray)</div>
<div class="abs" style="left:55px;top:254px;width:15.8px;height:94px;background:linear-gradient(#fff,#000)"></div>
<div class="abs t" style="left:76px;top:253.3px">474.329987</div>
<div class="abs t" style="left:76px;top:336.6px">-46.77</div>
<svg style="left:20px;top:354.6px" width="3.6" height="7" viewBox="0 0 3.6 7"><path d="M0 0 H0.9 L3.6 2.8 V4.2 L0.9 7 H0Z" fill="#505050"/></svg><div class="abs" style="left:35.0px;top:351.9px;width:13px;height:13px;box-sizing:border-box;border:1px solid #b8b8b8;background:#fff"></div><svg style="left:57px;top:352.9px" width="13" height="12.8" viewBox="0 0 3 3"><rect x="0" y="0" width="1.02" height="1.02" fill="#1f3651"/><rect x="1" y="0" width="1.02" height="1.02" fill="#a8c7e8"/><rect x="2" y="0" width="1.02" height="1.02" fill="#1f3651"/><rect x="0" y="1" width="1.02" height="1.02" fill="#a8c7e8"/><rect x="1" y="1" width="1.02" height="1.02" fill="#1f3651"/><rect x="2" y="1" width="1.02" height="1.02" fill="#a8c7e8"/><rect x="0" y="2" width="1.02" height="1.02" fill="#1f3651"/><rect x="1" y="2" width="1.02" height="1.02" fill="#a8c7e8"/><rect x="0.22" y="0.22" width="0.56" height="0.56" fill="#16283f"/><rect x="2.22" y="0.22" width="0.56" height="0.56" fill="#16283f"/><rect x="1.22" y="1.22" width="0.56" height="0.56" fill="#16283f"/><rect x="0.22" y="2.22" width="0.56" height="0.56" fill="#16283f"/></svg><div class="abs lyr g" style="left:78px;top:351.0px">RGEALTI_MTQ_0710_1605_MNT_WGS84UTM20_MART87</div><svg style="left:20px;top:372.6px" width="3.6" height="7" viewBox="0 0 3.6 7"><path d="M0 0 H0.9 L3.6 2.8 V4.2 L0.9 7 H0Z" fill="#505050"/></svg><div class="abs" style="left:35.0px;top:369.9px;width:13px;height:13px;box-sizing:border-box;border:1px solid #b8b8b8;background:#fff"></div><svg style="left:57px;top:370.9px" width="13" height="12.8" viewBox="0 0 3 3"><rect x="0" y="0" width="1.02" height="1.02" fill="#1f3651"/><rect x="1" y="0" width="1.02" height="1.02" fill="#a8c7e8"/><rect x="2" y="0" width="1.02" height="1.02" fill="#1f3651"/><rect x="0" y="1" width="1.02" height="1.02" fill="#a8c7e8"/><rect x="1" y="1" width="1.02" height="1.02" fill="#1f3651"/><rect x="2" y="1" width="1.02" height="1.02" fill="#a8c7e8"/><rect x="0" y="2" width="1.02" height="1.02" fill="#1f3651"/><rect x="1" y="2" width="1.02" height="1.02" fill="#a8c7e8"/><rect x="0.22" y="0.22" width="0.56" height="0.56" fill="#16283f"/><rect x="2.22" y="0.22" width="0.56" height="0.56" fill="#16283f"/><rect x="1.22" y="1.22" width="0.56" height="0.56" fill="#16283f"/><rect x="0.22" y="2.22" width="0.56" height="0.56" fill="#16283f"/></svg><div class="abs lyr g" style="left:78px;top:369.0px">RGEALTI_MTQ_0710_1600_MNT_WGS84UTM20_MART87</div><svg style="left:20px;top:390.6px" width="3.6" height="7" viewBox="0 0 3.6 7"><path d="M0 0 H0.9 L3.6 2.8 V4.2 L0.9 7 H0Z" fill="#505050"/></svg><div class="abs" style="left:35.0px;top:387.9px;width:13px;height:13px;box-sizing:border-box;border:1px solid #b8b8b8;background:#fff"></div><svg style="left:57px;top:388.9px" width="13" height="12.8" viewBox="0 0 3 3"><rect x="0" y="0" width="1.02" height="1.02" fill="#1f3651"/><rect x="1" y="0" width="1.02" height="1.02" fill="#a8c7e8"/><rect x="2" y="0" width="1.02" height="1.02" fill="#1f3651"/><rect x="0" y="1" width="1.02" height="1.02" fill="#a8c7e8"/><rect x="1" y="1" width="1.02" height="1.02" fill="#1f3651"/><rect x="2" y="1" width="1.02" height="1.02" fill="#a8c7e8"/><rect x="0" y="2" width="1.02" height="1.02" fill="#1f3651"/><rect x="1" y="2" width="1.02" height="1.02" fill="#a8c7e8"/><rect x="0.22" y="0.22" width="0.56" height="0.56" fill="#16283f"/><rect x="2.22" y="0.22" width="0.56" height="0.56" fill="#16283f"/><rect x="1.22" y="1.22" width="0.56" height="0.56" fill="#16283f"/><rect x="0.22" y="2.22" width="0.56" height="0.56" fill="#16283f"/></svg><div class="abs lyr g" style="left:78px;top:387.0px">RGEALTI_MTQ_0705_1605_MNT_WGS84UTM20_MART87</div><svg style="left:20px;top:408.6px" width="3.6" height="7" viewBox="0 0 3.6 7"><path d="M0 0 H0.9 L3.6 2.8 V4.2 L0.9 7 H0Z" fill="#505050"/></svg><div class="abs" style="left:35.0px;top:405.9px;width:13px;height:13px;box-sizing:border-box;border:1px solid #b8b8b8;background:#fff"></div><svg style="left:57px;top:406.9px" width="13" height="12.8" viewBox="0 0 3 3"><rect x="0" y="0" width="1.02" height="1.02" fill="#1f3651"/><rect x="1" y="0" width="1.02" height="1.02" fill="#a8c7e8"/><rect x="2" y="0" width="1.02" height="1.02" fill="#1f3651"/><rect x="0" y="1" width="1.02" height="1.02" fill="#a8c7e8"/><rect x="1" y="1" width="1.02" height="1.02" fill="#1f3651"/><rect x="2" y="1" width="1.02" height="1.02" fill="#a8c7e8"/><rect x="0" y="2" width="1.02" height="1.02" fill="#1f3651"/><rect x="1" y="2" width="1.02" height="1.02" fill="#a8c7e8"/><rect x="0.22" y="0.22" width="0.56" height="0.56" fill="#16283f"/><rect x="2.22" y="0.22" width="0.56" height="0.56" fill="#16283f"/><rect x="1.22" y="1.22" width="0.56" height="0.56" fill="#16283f"/><rect x="0.22" y="2.22" width="0.56" height="0.56" fill="#16283f"/></svg><div class="abs lyr g" style="left:78px;top:405.0px">RGEALTI_MTQ_0705_1600_MNT_WGS84UTM20_MART87</div><svg style="left:18.9px;top:428.5px" width="6.4" height="4" viewBox="0 0 6.4 4"><path d="M0 0 H6.4 V0.9 L3.9 4 H2.5 L0 0.9Z" fill="#505050"/></svg><div class="abs" style="left:35.0px;top:423.9px;width:13px;height:13px;box-sizing:border-box;border:1px solid #b8b8b8;background:#fff"></div><svg style="left:35.0px;top:423.9px" width="13" height="13" viewBox="0 0 13 13"><path d="M2.6 6.6 L5.2 9.8 L10.4 2.8" fill="none" stroke="#000" stroke-width="1.7"/></svg><svg style="left:57px;top:424.9px" width="13" height="12.8" viewBox="0 0 3 3"><rect x="0" y="0" width="1.02" height="1.02" fill="#1f3651"/><rect x="1" y="0" width="1.02" height="1.02" fill="#a8c7e8"/><rect x="2" y="0" width="1.02" height="1.02" fill="#1f3651"/><rect x="0" y="1" width="1.02" height="1.02" fill="#a8c7e8"/><rect x="1" y="1" width="1.02" height="1.02" fill="#1f3651"/><rect x="2" y="1" width="1.02" height="1.02" fill="#a8c7e8"/><rect x="0" y="2" width="1.02" height="1.02" fill="#1f3651"/><rect x="1" y="2" width="1.02" height="1.02" fill="#a8c7e8"/><rect x="0.22" y="0.22" width="0.56" height="0.56" fill="#16283f"/><rect x="2.22" y="0.22" width="0.56" height="0.56" fill="#16283f"/><rect x="1.22" y="1.22" width="0.56" height="0.56" fill="#16283f"/><rect x="0.22" y="2.22" width="0.56" height="0.56" fill="#16283f"/></svg><div class="abs lyr" style="left:78px;top:423.0px;font-style:normal;letter-spacing:-0.55px">OpenStreetMap</div>
<div class="badge" style="left:246.2px;top:194px">1</div>


<div class="abs" style="left:410px;top:151px;width:570px;height:1px;background:#8f8f8f"></div>
<div class="abs" style="left:410px;top:151px;width:1px;height:316px;background:#8f8f8f"></div>
<svg style="left:411px;top:152px;overflow:hidden" width="569" height="315" viewBox="411 152 569 315" font-family="Liberation Sans, sans-serif">
<defs>
<filter id="sh" x="-20%" y="-20%" width="140%" height="150%"><feGaussianBlur stdDeviation="7"/></filter>
</defs>
<rect x="411" y="152" width="569" height="315" fill="#f2efe9"/>
<!-- residential -->
<path d="M466 152 L480 154 L520 155.5 L538 160.5 L547 157 L560 163 L570 175 L546 206 L567.5 202 L575 210.5 L586.5 208 L594 216 L606.5 211 L613 206 L684 152 Z" fill="#e0dfdf"/>
<!-- scrub -->
<path d="M414.7 373.4 L488.5 342.8 L515 366.4 L522 369.2 L563.6 372.8 L612.5 377.5 L648 381.8 L655.4 390.4 L660 412 L664 420.4 L724.5 383.3 L733.7 406.5 L746.6 445 L752 468 L410 468 Z" fill="#c8d7ab"/>
<path d="M965 383 L980 380 L980 468 L884 468 L884 459 L965 459 Z" fill="#c8d7ab"/>
<path d="M411 185.5 H414 Q415.5 185.5 415.5 187 V202 Q415.5 203.5 414 203.5 H411 Z" fill="#f4f5d2" stroke="#dcddb4" stroke-width="0.6"/>
<path d="M420.7 392.6H425.3M423.0 392.6V388.8M423.0 392.4L421.1 389.8M423.0 392.4L424.9 389.8" stroke="#a9c08a" stroke-width="0.7" fill="none"/><path d="M426.7 412.6H431.3M429.0 412.6V408.8M429.0 412.4L427.1 409.8M429.0 412.4L430.9 409.8" stroke="#a9c08a" stroke-width="0.7" fill="none"/><path d="M423.7 437.6H428.3M426.0 437.6V433.8M426.0 437.4L424.1 434.8M426.0 437.4L427.9 434.8" stroke="#a9c08a" stroke-width="0.7" fill="none"/><path d="M427.7 453.6H432.3M430.0 453.6V449.8M430.0 453.4L428.1 450.8M430.0 453.4L431.9 450.8" stroke="#a9c08a" stroke-width="0.7" fill="none"/><path d="M445.7 456.6H450.3M448.0 456.6V452.8M448.0 456.4L446.1 453.8M448.0 456.4L449.9 453.8" stroke="#a9c08a" stroke-width="0.7" fill="none"/><path d="M427.7 464.6H432.3M430.0 464.6V460.8M430.0 464.4L428.1 461.8M430.0 464.4L431.9 461.8" stroke="#a9c08a" stroke-width="0.7" fill="none"/><path d="M459.7 391.6H464.3M462.0 391.6V387.8M462.0 391.4L460.1 388.8M462.0 391.4L463.9 388.8" stroke="#a9c08a" stroke-width="0.7" fill="none"/><path d="M471.7 400.6H476.3M474.0 400.6V396.8M474.0 400.4L472.1 397.8M474.0 400.4L475.9 397.8" stroke="#a9c08a" stroke-width="0.7" fill="none"/><path d="M457.7 431.6H462.3M460.0 431.6V427.8M460.0 431.4L458.1 428.8M460.0 431.4L461.9 428.8" stroke="#a9c08a" stroke-width="0.7" fill="none"/><path d="M474.7 447.6H479.3M477.0 447.6V443.8M477.0 447.4L475.1 444.8M477.0 447.4L478.9 444.8" stroke="#a9c08a" stroke-width="0.7" fill="none"/><path d="M482.7 363.6H487.3M485.0 363.6V359.8M485.0 363.4L483.1 360.8M485.0 363.4L486.9 360.8" stroke="#a9c08a" stroke-width="0.7" fill="none"/><path d="M490.7 381.6H495.3M493.0 381.6V377.8M493.0 381.4L491.1 378.8M493.0 381.4L494.9 378.8" stroke="#a9c08a" stroke-width="0.7" fill="none"/><path d="M494.7 425.6H499.3M497.0 425.6V421.8M497.0 425.4L495.1 422.8M497.0 425.4L498.9 422.8" stroke="#a9c08a" stroke-width="0.7" fill="none"/><path d="M509.7 365.6H514.3M512.0 365.6V361.8M512.0 365.4L510.1 362.8M512.0 365.4L513.9 362.8" stroke="#a9c08a" stroke-width="0.7" fill="none"/><path d="M515.7 392.6H520.3M518.0 392.6V388.8M518.0 392.4L516.1 389.8M518.0 392.4L519.9 389.8" stroke="#a9c08a" stroke-width="0.7" fill="none"/><path d="M515.7 408.6H520.3M518.0 408.6V404.8M518.0 408.4L516.1 405.8M518.0 408.4L519.9 405.8" stroke="#a9c08a" stroke-width="0.7" fill="none"/><path d="M514.7 433.6H519.3M517.0 433.6V429.8M517.0 433.4L515.1 430.8M517.0 433.4L518.9 430.8" stroke="#a9c08a" stroke-width="0.7" fill="none"/><path d="M517.7 464.6H522.3M520.0 464.6V460.8M520.0 464.4L518.1 461.8M520.0 464.4L521.9 461.8" stroke="#a9c08a" stroke-width="0.7" fill="none"/><path d="M532.7 381.6H537.3M535.0 381.6V377.8M535.0 381.4L533.1 378.8M535.0 381.4L536.9 378.8" stroke="#a9c08a" stroke-width="0.7" fill="none"/><path d="M539.7 414.6H544.3M542.0 414.6V410.8M542.0 414.4L540.1 411.8M542.0 414.4L543.9 411.8" stroke="#a9c08a" stroke-width="0.7" fill="none"/><path d="M530.7 453.6H535.3M533.0 453.6V449.8M533.0 453.4L531.1 450.8M533.0 453.4L534.9 450.8" stroke="#a9c08a" stroke-width="0.7" fill="none"/><path d="M550.7 389.6H555.3M553.0 389.6V385.8M553.0 389.4L551.1 386.8M553.0 389.4L554.9 386.8" stroke="#a9c08a" stroke-width="0.7" fill="none"/><path d="M563.7 406.6H568.3M566.0 406.6V402.8M566.0 406.4L564.1 403.8M566.0 406.4L567.9 403.8" stroke="#a9c08a" stroke-width="0.7" fill="none"/><path d="M564.7 431.6H569.3M567.0 431.6V427.8M567.0 431.4L565.1 428.8M567.0 431.4L568.9 428.8" stroke="#a9c08a" stroke-width="0.7" fill="none"/><path d="M553.7 454.6H558.3M556.0 454.6V450.8M556.0 454.4L554.1 451.8M556.0 454.4L557.9 451.8" stroke="#a9c08a" stroke-width="0.7" fill="none"/><path d="M541.7 435.6H546.3M544.0 435.6V431.8M544.0 435.4L542.1 432.8M544.0 435.4L545.9 432.8" stroke="#a9c08a" stroke-width="0.7" fill="none"/><path d="M583.7 390.6H588.3M586.0 390.6V386.8M586.0 390.4L584.1 387.8M586.0 390.4L587.9 387.8" stroke="#a9c08a" stroke-width="0.7" fill="none"/><path d="M587.7 453.6H592.3M590.0 453.6V449.8M590.0 453.4L588.1 450.8M590.0 453.4L591.9 450.8" stroke="#a9c08a" stroke-width="0.7" fill="none"/><path d="M568.7 374.6H573.3M571.0 374.6V370.8M571.0 374.4L569.1 371.8M571.0 374.4L572.9 371.8" stroke="#a9c08a" stroke-width="0.7" fill="none"/><path d="M580.7 413.6H585.3M583.0 413.6V409.8M583.0 413.4L581.1 410.8M583.0 413.4L584.9 410.8" stroke="#a9c08a" stroke-width="0.7" fill="none"/><path d="M595.7 415.6H600.3M598.0 415.6V411.8M598.0 415.4L596.1 412.8M598.0 415.4L599.9 412.8" stroke="#a9c08a" stroke-width="0.7" fill="none"/><path d="M598.7 437.6H603.3M601.0 437.6V433.8M601.0 437.4L599.1 434.8M601.0 437.4L602.9 434.8" stroke="#a9c08a" stroke-width="0.7" fill="none"/><path d="M623.7 385.6H628.3M626.0 385.6V381.8M626.0 385.4L624.1 382.8M626.0 385.4L627.9 382.8" stroke="#a9c08a" stroke-width="0.7" fill="none"/><path d="M631.7 384.6H636.3M634.0 384.6V380.8M634.0 384.4L632.1 381.8M634.0 384.4L635.9 381.8" stroke="#a9c08a" stroke-width="0.7" fill="none"/><path d="M625.7 411.6H630.3M628.0 411.6V407.8M628.0 411.4L626.1 408.8M628.0 411.4L629.9 408.8" stroke="#a9c08a" stroke-width="0.7" fill="none"/><path d="M626.7 425.6H631.3M629.0 425.6V421.8M629.0 425.4L627.1 422.8M629.0 425.4L630.9 422.8" stroke="#a9c08a" stroke-width="0.7" fill="none"/><path d="M605.7 437.6H610.3M608.0 437.6V433.8M608.0 437.4L606.1 434.8M608.0 437.4L609.9 434.8" stroke="#a9c08a" stroke-width="0.7" fill="none"/><path d="M623.7 449.6H628.3M626.0 449.6V445.8M626.0 449.4L624.1 446.8M626.0 449.4L627.9 446.8" stroke="#a9c08a" stroke-width="0.7" fill="none"/><path d="M613.7 466.6H618.3M616.0 466.6V462.8M616.0 466.4L614.1 463.8M616.0 466.4L617.9 463.8" stroke="#a9c08a" stroke-width="0.7" fill="none"/><path d="M648.7 464.6H653.3M651.0 464.6V460.8M651.0 464.4L649.1 461.8M651.0 464.4L652.9 461.8" stroke="#a9c08a" stroke-width="0.7" fill="none"/><path d="M625.7 403.6H630.3M628.0 403.6V399.8M628.0 403.4L626.1 400.8M628.0 403.4L629.9 400.8" stroke="#a9c08a" stroke-width="0.7" fill="none"/><path d="M647.7 416.6H652.3M650.0 416.6V412.8M650.0 416.4L648.1 413.8M650.0 416.4L651.9 413.8" stroke="#a9c08a" stroke-width="0.7" fill="none"/><path d="M646.7 438.6H651.3M649.0 438.6V434.8M649.0 438.4L647.1 435.8M649.0 438.4L650.9 435.8" stroke="#a9c08a" stroke-width="0.7" fill="none"/><path d="M623.7 449.6H628.3M626.0 449.6V445.8M626.0 449.4L624.1 446.8M626.0 449.4L627.9 446.8" stroke="#a9c08a" stroke-width="0.7" fill="none"/><path d="M668.7 431.6H673.3M671.0 431.6V427.8M671.0 431.4L669.1 428.8M671.0 431.4L672.9 428.8" stroke="#a9c08a" stroke-width="0.7" fill="none"/><path d="M674.7 461.6H679.3M677.0 461.6V457.8M677.0 461.4L675.1 458.8M677.0 461.4L678.9 458.8" stroke="#a9c08a" stroke-width="0.7" fill="none"/><path d="M693.7 426.6H698.3M696.0 426.6V422.8M696.0 426.4L694.1 423.8M696.0 426.4L697.9 423.8" stroke="#a9c08a" stroke-width="0.7" fill="none"/><path d="M696.7 451.6H701.3M699.0 451.6V447.8M699.0 451.4L697.1 448.8M699.0 451.4L700.9 448.8" stroke="#a9c08a" stroke-width="0.7" fill="none"/><path d="M708.7 411.6H713.3M711.0 411.6V407.8M711.0 411.4L709.1 408.8M711.0 411.4L712.9 408.8" stroke="#a9c08a" stroke-width="0.7" fill="none"/><path d="M712.7 447.6H717.3M715.0 447.6V443.8M715.0 447.4L713.1 444.8M715.0 447.4L716.9 444.8" stroke="#a9c08a" stroke-width="0.7" fill="none"/><path d="M729.7 424.6H734.3M732.0 424.6V420.8M732.0 424.4L730.1 421.8M732.0 424.4L733.9 421.8" stroke="#a9c08a" stroke-width="0.7" fill="none"/><path d="M725.7 437.6H730.3M728.0 437.6V433.8M728.0 437.4L726.1 434.8M728.0 437.4L729.9 434.8" stroke="#a9c08a" stroke-width="0.7" fill="none"/><path d="M735.7 461.6H740.3M738.0 461.6V457.8M738.0 461.4L736.1 458.8M738.0 461.4L739.9 458.8" stroke="#a9c08a" stroke-width="0.7" fill="none"/><path d="M967.7 396.6H972.3M970.0 396.6V392.8M970.0 396.4L968.1 393.8M970.0 396.4L971.9 393.8" stroke="#a9c08a" stroke-width="0.7" fill="none"/><path d="M969.7 443.6H974.3M972.0 443.6V439.8M972.0 443.4L970.1 440.8M972.0 443.4L973.9 440.8" stroke="#a9c08a" stroke-width="0.7" fill="none"/><path d="M938.7 463.6H943.3M941.0 463.6V459.8M941.0 463.4L939.1 460.8M941.0 463.4L942.9 460.8" stroke="#a9c08a" stroke-width="0.7" fill="none"/><path d="M912.7 465.6H917.3M915.0 465.6V461.8M915.0 465.4L913.1 462.8M915.0 465.4L916.9 462.8" stroke="#a9c08a" stroke-width="0.7" fill="none"/>
<!-- ponds -->
<path d="M685 380 L696 373.5 L698 378 L688.5 385 Z" fill="#aad3df"/>
<path d="M732 316 Q736 313.5 739 316 Q739.5 319.5 736 320.5 Q732.5 320 732 316Z" fill="#aad3df"/>
<path d="M529 306 h4 v2 h-3z" fill="#aad3df"/>
<g fill="#aad3df"><circle cx="634" cy="164" r="0.9"/><circle cx="612" cy="162" r="0.9"/><circle cx="601" cy="152.5" r="0.9"/><circle cx="627" cy="179" r="0.9"/><circle cx="575" cy="160" r="0.8"/><circle cx="649" cy="165" r="0.8"/></g>
<!-- tracks -->
<g fill="none" stroke="#fff" stroke-width="1.2" stroke-linecap="round"><path d="M449 363 L462 367 L464 374"/><path d="M460 423 L482 410"/></g>
<!-- roads casing -->
<g fill="none" stroke="#e3ded6" stroke-linecap="round" stroke-linejoin="round">
<g stroke-width="6.2"><path d="M543 151 L553 160 L562 168 L571 174 Q576 180 573 186 Q568 192 572 196 L590 198 L606 201 Q612 205 606 211 Q601 218 599 224 Q598 232 603 238 Q610 245 617 252 Q619 262 613 272 L617 276 L652 288.5 L697 286 L703 293 L717 304 L730 313 L738 324"/><path d="M613 273 L622 290 L647 322 Q649 333 654 338 L667 347 Q664 356 662 366 Q658 380 657 392 Q656 400 660 412 Q665 425 665 440 L664 468"/><path d="M613 278 L591 280.5 Q588 280 588.5 271"/><path d="M655 290 L660 297 L648 317"/><path d="M702 292 Q698 285 697.5 275 Q696 262 700 259.5 L710 258.5 Q714 259 715 262.5"/><path d="M717 303 Q724 296 725.5 288 Q725 284 721 282.5"/><path d="M667 347 L680 335.5 Q688 333 697 334.5 L710 335 Q720 332 727 327.5 L733 322 L738 324"/><path d="M683 333.5 Q687 329 686 325 L672 316.5"/><path d="M732 324 Q727 333 727.5 340 L728 348 L747 363"/><path d="M571 170 L581 163 L593 151"/><path d="M581 164 L607 177 Q612 180 620 179.5 L640 166 L657 152"/><path d="M607 177 Q605 170 609 166 L627 152"/><path d="M833 231 Q826 240 824 247 Q823 255 828 265 Q830 272 826 279 L818 288 L813 297 L802 293.5 L794 313 L790 320"/><path d="M763 303 L757 318"/></g>
<g stroke-width="3.4"><path d="M660 295 L647.5 317.5"/><path d="M648.5 338 L640 352.5 L636 377.5"/><path d="M669 349 L680 360"/><path d="M683 289 L686.5 302.5"/><path d="M744 300 L741 316"/><path d="M771 304 L765 318"/></g>
</g>
<g fill="none" stroke="#fff" stroke-linecap="round" stroke-linejoin="round">
<g stroke-width="4.8"><path d="M543 151 L553 160 L562 168 L571 174 Q576 180 573 186 Q568 192 572 196 L590 198 L606 201 Q612 205 606 211 Q601 218 599 224 Q598 232 603 238 Q610 245 617 252 Q619 262 613 272 L617 276 L652 288.5 L697 286 L703 293 L717 304 L730 313 L738 324"/><path d="M613 273 L622 290 L647 322 Q649 333 654 338 L667 347 Q664 356 662 366 Q658 380 657 392 Q656 400 660 412 Q665 425 665 440 L664 468"/><path d="M613 278 L591 280.5 Q588 280 588.5 271"/><path d="M655 290 L660 297 L648 317"/><path d="M702 292 Q698 285 697.5 275 Q696 262 700 259.5 L710 258.5 Q714 259 715 262.5"/><path d="M717 303 Q724 296 725.5 288 Q725 284 721 282.5"/><path d="M667 347 L680 335.5 Q688 333 697 334.5 L710 335 Q720 332 727 327.5 L733 322 L738 324"/><path d="M683 333.5 Q687 329 686 325 L672 316.5"/><path d="M732 324 Q727 333 727.5 340 L728 348 L747 363"/><path d="M571 170 L581 163 L593 151"/><path d="M581 164 L607 177 Q612 180 620 179.5 L640 166 L657 152"/><path d="M607 177 Q605 170 609 166 L627 152"/><path d="M833 231 Q826 240 824 247 Q823 255 828 265 Q830 272 826 279 L818 288 L813 297 L802 293.5 L794 313 L790 320"/><path d="M763 303 L757 318"/></g>
<g stroke-width="2.2"><path d="M660 295 L647.5 317.5"/><path d="M648.5 338 L640 352.5 L636 377.5"/><path d="M669 349 L680 360"/><path d="M683 289 L686.5 302.5"/><path d="M744 300 L741 316"/><path d="M771 304 L765 318"/></g>
</g>
<rect x="529.9" y="151.3" width="4.2" height="3.4" transform="rotate(20 532 153)" fill="#d9cfc6" stroke="#bfae9f" stroke-width="0.6"/><rect x="548.9" y="151.3" width="4.2" height="3.4" transform="rotate(20 551 153)" fill="#d9cfc6" stroke="#bfae9f" stroke-width="0.6"/><rect x="569.9" y="152.3" width="4.2" height="3.4" transform="rotate(30 572 154)" fill="#d9cfc6" stroke="#bfae9f" stroke-width="0.6"/><rect x="575.9" y="156.3" width="4.2" height="3.4" transform="rotate(30 578 158)" fill="#d9cfc6" stroke="#bfae9f" stroke-width="0.6"/><rect x="590.9" y="159.3" width="4.2" height="3.4" transform="rotate(-25 593 161)" fill="#d9cfc6" stroke="#bfae9f" stroke-width="0.6"/><rect x="599.9" y="167.3" width="4.2" height="3.4" transform="rotate(-25 602 169)" fill="#d9cfc6" stroke="#bfae9f" stroke-width="0.6"/><rect x="613.9" y="172.3" width="4.2" height="3.4" transform="rotate(-25 616 174)" fill="#d9cfc6" stroke="#bfae9f" stroke-width="0.6"/><rect x="622.9" y="166.3" width="4.2" height="3.4" transform="rotate(-30 625 168)" fill="#d9cfc6" stroke="#bfae9f" stroke-width="0.6"/><rect x="628.9" y="162.3" width="4.2" height="3.4" transform="rotate(-30 631 164)" fill="#d9cfc6" stroke="#bfae9f" stroke-width="0.6"/><rect x="636.9" y="156.3" width="4.2" height="3.4" transform="rotate(-30 639 158)" fill="#d9cfc6" stroke="#bfae9f" stroke-width="0.6"/><rect x="645.9" y="150.8" width="4.2" height="3.4" transform="rotate(-30 648 152.5)" fill="#d9cfc6" stroke="#bfae9f" stroke-width="0.6"/><rect x="600.9" y="153.3" width="4.2" height="3.4" transform="rotate(-30 603 155)" fill="#d9cfc6" stroke="#bfae9f" stroke-width="0.6"/><rect x="613.9" y="152.3" width="4.2" height="3.4" transform="rotate(-30 616 154)" fill="#d9cfc6" stroke="#bfae9f" stroke-width="0.6"/><rect x="626.9" y="182.3" width="4.2" height="3.4" transform="rotate(-25 629 184)" fill="#d9cfc6" stroke="#bfae9f" stroke-width="0.6"/><rect x="637.9" y="176.3" width="4.2" height="3.4" transform="rotate(-25 640 178)" fill="#d9cfc6" stroke="#bfae9f" stroke-width="0.6"/><rect x="647.9" y="167.3" width="4.2" height="3.4" transform="rotate(-25 650 169)" fill="#d9cfc6" stroke="#bfae9f" stroke-width="0.6"/><rect x="656.9" y="160.3" width="4.2" height="3.4" transform="rotate(-30 659 162)" fill="#d9cfc6" stroke="#bfae9f" stroke-width="0.6"/><rect x="577.9" y="171.3" width="4.2" height="3.4" transform="rotate(10 580 173)" fill="#d9cfc6" stroke="#bfae9f" stroke-width="0.6"/><rect x="580.9" y="181.3" width="4.2" height="3.4" transform="rotate(15 583 183)" fill="#d9cfc6" stroke="#bfae9f" stroke-width="0.6"/><rect x="609.4" y="193.8" width="4.2" height="3.4" transform="rotate(20 611.5 195.5)" fill="#d9cfc6" stroke="#bfae9f" stroke-width="0.6"/><rect x="593.9" y="153.3" width="4.2" height="3.4" transform="rotate(-30 596 155)" fill="#d9cfc6" stroke="#bfae9f" stroke-width="0.6"/><rect x="647.5" y="260.7" width="3.0" height="2.6" transform="rotate(-20 649 262)" fill="#d9cfc6" stroke="#bfae9f" stroke-width="0.6"/><rect x="680.5" y="273.7" width="3.0" height="2.6" transform="rotate(15 682 275)" fill="#d9cfc6" stroke="#bfae9f" stroke-width="0.6"/><rect x="650.5" y="280.7" width="3.0" height="2.6" transform="rotate(30 652 282)" fill="#d9cfc6" stroke="#bfae9f" stroke-width="0.6"/><rect x="615.5" y="270.2" width="3.0" height="2.6" transform="rotate(0 617 271.5)" fill="#d9cfc6" stroke="#bfae9f" stroke-width="0.6"/><rect x="882.0" y="197.7" width="3.0" height="2.6" transform="rotate(0 883.5 199)" fill="#d9cfc6" stroke="#bfae9f" stroke-width="0.6"/><rect x="834.5" y="233.7" width="3.0" height="2.6" transform="rotate(0 836 235)" fill="#d9cfc6" stroke="#bfae9f" stroke-width="0.6"/><rect x="713.5" y="292.7" width="3.0" height="2.6" transform="rotate(-20 715 294)" fill="#d9cfc6" stroke="#bfae9f" stroke-width="0.6"/><rect x="717.5" y="290.7" width="3.0" height="2.6" transform="rotate(0 719 292)" fill="#d9cfc6" stroke="#bfae9f" stroke-width="0.6"/><rect x="747.5" y="298.7" width="3.0" height="2.6" transform="rotate(15 749 300)" fill="#d9cfc6" stroke="#bfae9f" stroke-width="0.6"/><rect x="750.5" y="304.7" width="3.0" height="2.6" transform="rotate(0 752 306)" fill="#d9cfc6" stroke="#bfae9f" stroke-width="0.6"/><rect x="755.5" y="307.7" width="3.0" height="2.6" transform="rotate(0 757 309)" fill="#d9cfc6" stroke="#bfae9f" stroke-width="0.6"/><rect x="764.5" y="305.7" width="3.0" height="2.6" transform="rotate(30 766 307)" fill="#d9cfc6" stroke="#bfae9f" stroke-width="0.6"/><rect x="769.5" y="307.7" width="3.0" height="2.6" transform="rotate(30 771 309)" fill="#d9cfc6" stroke="#bfae9f" stroke-width="0.6"/><rect x="640.5" y="334.7" width="3.0" height="2.6" transform="rotate(0 642 336)" fill="#d9cfc6" stroke="#bfae9f" stroke-width="0.6"/><rect x="694.5" y="347.7" width="3.0" height="2.6" transform="rotate(15 696 349)" fill="#d9cfc6" stroke="#bfae9f" stroke-width="0.6"/><rect x="655.5" y="375.7" width="3.0" height="2.6" transform="rotate(0 657 377)" fill="#d9cfc6" stroke="#bfae9f" stroke-width="0.6"/><rect x="670.5" y="377.7" width="3.0" height="2.6" transform="rotate(30 672 379)" fill="#d9cfc6" stroke="#bfae9f" stroke-width="0.6"/><rect x="665.5" y="384.7" width="3.0" height="2.6" transform="rotate(0 667 386)" fill="#d9cfc6" stroke="#bfae9f" stroke-width="0.6"/><rect x="661.5" y="396.7" width="3.0" height="2.6" transform="rotate(0 663 398)" fill="#d9cfc6" stroke="#bfae9f" stroke-width="0.6"/><rect x="737.5" y="389.7" width="3.0" height="2.6" transform="rotate(15 739 391)" fill="#d9cfc6" stroke="#bfae9f" stroke-width="0.6"/><rect x="731.5" y="400.7" width="3.0" height="2.6" transform="rotate(0 733 402)" fill="#d9cfc6" stroke="#bfae9f" stroke-width="0.6"/><rect x="737.5" y="399.7" width="3.0" height="2.6" transform="rotate(30 739 401)" fill="#d9cfc6" stroke="#bfae9f" stroke-width="0.6"/><rect x="738.5" y="406.7" width="3.0" height="2.6" transform="rotate(0 740 408)" fill="#d9cfc6" stroke="#bfae9f" stroke-width="0.6"/><rect x="431.5" y="367.7" width="3.0" height="2.6" transform="rotate(15 433 369)" fill="#d9cfc6" stroke="#bfae9f" stroke-width="0.6"/><rect x="434.5" y="365.7" width="3.0" height="2.6" transform="rotate(0 436 367)" fill="#d9cfc6" stroke="#bfae9f" stroke-width="0.6"/><rect x="443.5" y="422.7" width="3.0" height="2.6" transform="rotate(15 445 424)" fill="#d9cfc6" stroke="#bfae9f" stroke-width="0.6"/><rect x="447.5" y="430.7" width="3.0" height="2.6" transform="rotate(-20 449 432)" fill="#d9cfc6" stroke="#bfae9f" stroke-width="0.6"/><rect x="454.5" y="431.7" width="3.0" height="2.6" transform="rotate(30 456 433)" fill="#d9cfc6" stroke="#bfae9f" stroke-width="0.6"/><rect x="488.5" y="406.7" width="3.0" height="2.6" transform="rotate(15 490 408)" fill="#d9cfc6" stroke="#bfae9f" stroke-width="0.6"/><rect x="493.5" y="405.7" width="3.0" height="2.6" transform="rotate(0 495 407)" fill="#d9cfc6" stroke="#bfae9f" stroke-width="0.6"/><rect x="503.5" y="403.7" width="3.0" height="2.6" transform="rotate(-20 505 405)" fill="#d9cfc6" stroke="#bfae9f" stroke-width="0.6"/><rect x="795.5" y="310.7" width="3.0" height="2.6" transform="rotate(15 797 312)" fill="#d9cfc6" stroke="#bfae9f" stroke-width="0.6"/><rect x="411.3" y="290.0" width="4.6" height="4" transform="rotate(0 413.6 292)" fill="#d9cfc6" stroke="#bfae9f" stroke-width="0.6"/><rect x="411.7" y="295.4" width="4.6" height="4" transform="rotate(0 414 297.4)" fill="#d9cfc6" stroke="#bfae9f" stroke-width="0.6"/><rect x="421.0" y="294.6" width="4" height="4" transform="rotate(5 423 296.6)" fill="#d9cfc6" stroke="#bfae9f" stroke-width="0.6"/><rect x="434.8" y="287.9" width="4.4" height="4.2" transform="rotate(15 437 290)" fill="#d9cfc6" stroke="#bfae9f" stroke-width="0.6"/><rect x="447.9" y="305.4" width="3.4" height="3.2" transform="rotate(20 449.6 307)" fill="#d9cfc6" stroke="#bfae9f" stroke-width="0.6"/><rect x="426.1" y="314.8" width="3" height="3.6" transform="rotate(10 427.6 316.6)" fill="#d9cfc6" stroke="#bfae9f" stroke-width="0.6"/><rect x="454.6" y="337.9" width="4.4" height="4.2" transform="rotate(20 456.8 340)" fill="#d9cfc6" stroke="#bfae9f" stroke-width="0.6"/><rect x="451.1" y="344.5" width="3" height="3" transform="rotate(0 452.6 346)" fill="#d9cfc6" stroke="#bfae9f" stroke-width="0.6"/>
<!-- yellow tertiary road -->
<path id="yroad" d="M400.6 222.7 L406.6 241.7 Q410.5 256 415.75 270.35 Q423 284 431.4 296.5 L446.6 318.4 Q449.8 324 448.4 332 Q446 346 444.6 362 Q446 376 449.5 387 Q453 402 458 415 Q466 426 483 434.6 Q492 441 494 451 L494.6 470" fill="none" stroke="#a9ab62" stroke-width="10.2" stroke-linejoin="round"/>
<path d="M400.6 222.7 L406.6 241.7 Q410.5 256 415.75 270.35 Q423 284 431.4 296.5 L446.6 318.4 Q449.8 324 448.4 332 Q446 346 444.6 362 Q446 376 449.5 387 Q453 402 458 415 Q466 426 483 434.6 Q492 441 494 451 L494.6 470" fill="none" stroke="#f5f8ad" stroke-width="8.6" stroke-linejoin="round"/>
<path id="ytext1" d="M400.6 222.7 L406.6 241.7 Q410.5 256 415.75 270.35 Q423 284 431.4 296.5 L447.4 319.6" fill="none"/>
<path id="ytext2" d="M445.6 384 Q449.5 387 453 402 Q455 409 458 415 Q466 426 483 434.6 Q492 441 494 451 L494.6 480" fill="none"/>
<g font-size="9" fill="#111" stroke="#fdfdf0" stroke-width="2.6" paint-order="stroke fill" stroke-linejoin="round" style="paint-order:stroke fill">
<text dy="3.1" text-anchor="end"><textPath href="#ytext1" startOffset="100%">Route de l'Anse Caffard</textPath></text>
<text dy="3.1"><textPath href="#ytext2" startOffset="2">Route de l'Anse Caffard</textPath></text>
</g>
<!-- red tiny label -->
<text font-size="4.2" font-weight="bold" fill="#f4442e" transform="translate(590 169.5) rotate(27)">Serenas</text>
<!-- red dashed path -->
<path d="M889 464 Q905 459.5 924 459 M966 420 L980 416" fill="none" stroke="#f37d78" stroke-width="1" stroke-dasharray="2.5 2"/>
<!-- new point -->
<circle cx="743" cy="260" r="3.7" fill="#f77279" stroke="#f21f26" stroke-width="1"/>
<!-- dialog shadow -->
<rect x="745" y="317" width="224" height="150" rx="10" fill="#000" opacity="0.33" filter="url(#sh)"/>
</svg>
<div class="badge" style="left:707.1px;top:218.9px">4</div>


<div class="abs" id="dlg" style="left:747px;top:314.5px;width:219.5px;height:144.5px;border-radius:8px;background:#f0f0f0;overflow:hidden;box-shadow:0 0 0 0.6px rgba(120,120,120,.55)">
  <div class="abs" style="left:0;top:0;width:100%;height:30.5px;background:#eef2f9"></div>
</div>
<!-- qgis logo -->
<svg style="left:755px;top:321px" width="16" height="16" viewBox="0 0 16 16">
  <circle cx="7.3" cy="7.4" r="5.3" fill="#fff" stroke="#72a72c" stroke-width="3.1"/>
  <path d="M9.4 9.4 L14.4 14.4" stroke="#5f9524" stroke-width="3.3" stroke-linecap="butt"/>
  <path d="M5.6 5.8 L9.8 6.9 L12.6 10.4 L10.4 12.6 L6.9 9.8 Z" fill="#f3c21f"/>
  <path d="M5.6 5.8 L8.6 7.4 L12.2 11 L11 12.2 L7.4 8.6 Z" fill="#ee7a14"/>
</svg>
<div class="abs" style="left:777px;top:322px;font-size:12px;line-height:16px;color:#1b1b1b;white-space:nowrap">wwtp -...</div>
<div class="abs" style="left:847px;top:328.6px;width:10px;height:1px;background:#b9bcc2"></div>
<div class="abs" style="left:892px;top:324px;width:10px;height:10px;box-sizing:border-box;border:1px solid #1a1a1a;border-radius:1.4px"></div>
<svg style="left:938px;top:324px" width="10" height="10" viewBox="0 0 10 10"><path d="M0.3 0.3 L9.7 9.7 M9.7 0.3 L0.3 9.7" stroke="#1a1a1a" stroke-width="1.1" fill="none"/></svg>
<div class="abs" style="left:765px;top:366px;font-size:11.2px;line-height:16px;color:#000">fid</div>
<div class="abs" style="left:791px;top:363px;width:138px;height:20px;border:1.2px solid #3d9be9;border-radius:3px;background:#fff"></div>
<div class="abs" style="left:794.5px;top:367px;font-size:11.2px;line-height:16px;color:#000;white-space:nowrap;letter-spacing:-0.1px">Autogenerate</div>
<div class="abs" style="left:859.5px;top:367.5px;width:1px;height:13px;background:#000"></div>
<svg style="left:909px;top:369px" width="13.5" height="10.5" viewBox="0 0 27 21"><path d="M9 0 H24 Q27 0 27 3 V18 Q27 21 24 21 H9 L0 10.5 Z" fill="#9a9a9a"/><path d="M11.5 5.5 L21.5 15.5 M21.5 5.5 L11.5 15.5" stroke="#fff" stroke-width="2.6"/></svg>
<svg style="left:937.5px;top:370px" width="10" height="9.5" viewBox="0 0 20 19"><path d="M1 9.5 L4.5 7.5 Q6.5 10 7.5 13 Q12 5 19 0.5 L19.5 2 Q13 8.5 8.5 18.5 L6 18.5 Q4.5 13.5 1 9.5Z" fill="#3f9a2d"/></svg>
<!-- OK button with highlight -->
<div class="abs" style="left:790.2px;top:427px;width:83.7px;height:23px;background:#3f506b"></div><div class="abs" style="left:793px;top:429.8px;width:78.1px;height:17.4px;background:linear-gradient(#fdfdfe,#e4e9ef)"></div>
<div class="abs" style="left:870.1px;top:429.8px;width:1px;height:17.4px;background:#3f8fdc"></div>
<div class="abs" style="left:792px;top:431.6px;width:79px;text-align:center;font-size:10.8px;line-height:14px;color:#000">OK</div>
<div class="abs" style="left:877px;top:428px;width:80px;height:21.5px;border:1px solid #adadad;box-sizing:border-box;background:linear-gradient(#fdfdfd,#ebebeb);border-radius:1px"></div>
<div class="abs" style="left:877px;top:431.6px;width:80px;text-align:center;font-size:10.8px;line-height:14px;color:#000;letter-spacing:0.2px">Cancel</div>
<div class="badge" style="left:766px;top:407.7px">5</div>

</body></html>
